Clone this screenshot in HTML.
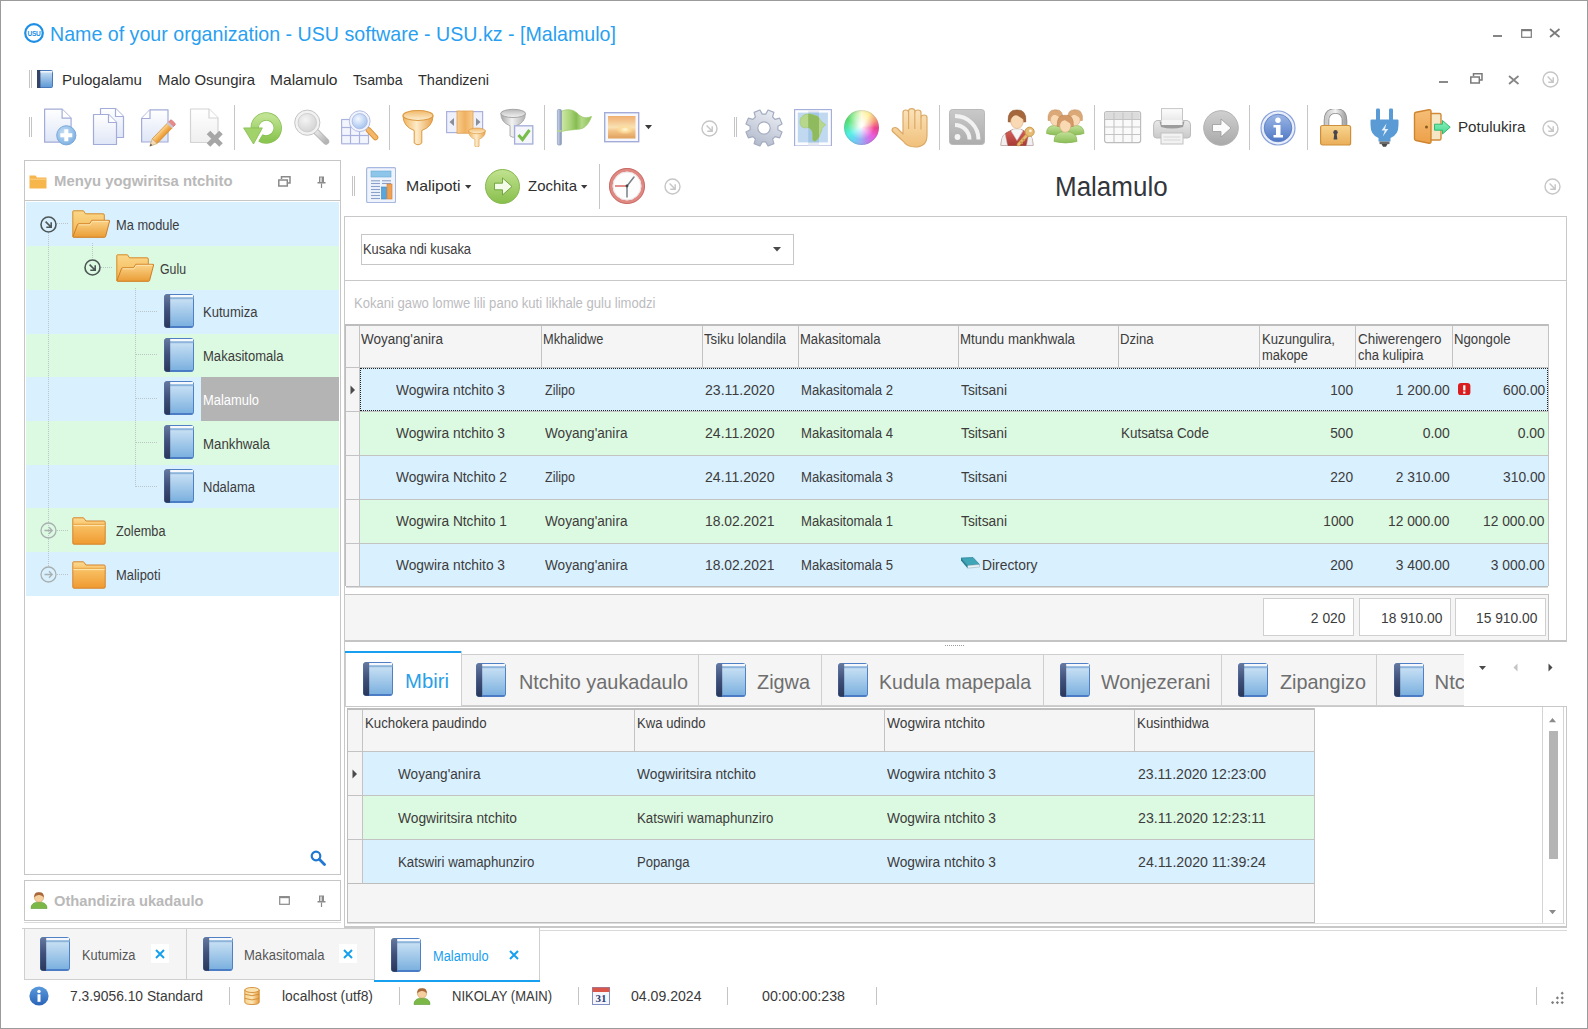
<!DOCTYPE html>
<html><head><meta charset="utf-8"><title>Malamulo</title>
<style>
html,body{margin:0;padding:0;}
body{width:1588px;height:1029px;position:relative;overflow:hidden;background:#fff;font-family:"Liberation Sans", sans-serif;}
body>div,body>span,body>svg{position:absolute;box-sizing:border-box;}
.t{white-space:nowrap;display:block;}
</style></head><body>
<div style="left:0px;top:0px;width:1588px;height:1029px;border:1px solid #9b9b9b;"></div>
<svg style="left:23.5px;top:22.5px" width="20" height="20" viewBox="0 0 20 20"><circle cx="10" cy="10" r="8.8" fill="#fff" stroke="#1e8fe6" stroke-width="2.2"/><text x="10" y="12.6" font-family="Liberation Sans, sans-serif" font-size="6.6" font-weight="700" fill="#1e8fe6" text-anchor="middle" letter-spacing="-0.3">USU</text></svg>
<span id="t1" class="t" style="left:49.5px;top:20.6px;line-height:26px;font-size:19.8px;color:#2a9ff0;font-weight:400;transform:scaleX(0.9920);transform-origin:left center;">Name of your organization - USU software - USU.kz - [Malamulo]</span>
<div style="left:1493px;top:35px;width:9px;height:2px;background:#858585"></div>
<svg style="left:1520.5px;top:28.5px" width="11" height="9" viewBox="0 0 11 9"><rect x="0.7" y="0.7" width="9.6" height="7.6" fill="none" stroke="#7a7a7a" stroke-width="1.2"/><path d="M0.7 1.2 H10.3" stroke="#7a7a7a" stroke-width="2"/></svg>
<svg style="left:1549px;top:28px" width="12" height="10" viewBox="0 0 12 10"><path d="M1 1 L10.5 9 M10.5 1 L1 9" stroke="#7a7a7a" stroke-width="1.7"/></svg>
<div style="left:29px;top:70px;width:1px;height:18px;background:#c4c4c4"></div>
<div style="left:31px;top:70px;width:1px;height:18px;background:#c4c4c4"></div>
<svg style="left:37px;top:70px" width="16" height="18" viewBox="0 0 16 18"><defs><linearGradient id="g1" x1="0" y1="0" x2="0" y2="1"><stop offset="0" stop-color="#cfe3f5"/><stop offset="1" stop-color="#5c98d6"/></linearGradient></defs><rect x="0.5" y="0.5" width="15" height="17" rx="1" fill="url(#g1)" stroke="#4a78bb"/><rect x="0" y="0" width="3.4" height="18" fill="#33436a"/><rect x="3.4" y="1" width="12" height="1.5" fill="#f0f5fa"/></svg>
<span id="t2" class="t" style="left:62px;top:69.5px;line-height:20px;font-size:15px;color:#2f2f2f;font-weight:400;transform:scaleX(1.0099);transform-origin:left center;">Pulogalamu</span>
<span id="t3" class="t" style="left:158px;top:69.5px;line-height:20px;font-size:15px;color:#2f2f2f;font-weight:400;transform:scaleX(0.9944);transform-origin:left center;">Malo Osungira</span>
<span id="t4" class="t" style="left:270px;top:69.5px;line-height:20px;font-size:15px;color:#2f2f2f;font-weight:400;transform:scaleX(1.0380);transform-origin:left center;">Malamulo</span>
<span id="t5" class="t" style="left:353px;top:69.5px;line-height:20px;font-size:15px;color:#2f2f2f;font-weight:400;transform:scaleX(0.9423);transform-origin:left center;">Tsamba</span>
<span id="t6" class="t" style="left:418px;top:69.5px;line-height:20px;font-size:15px;color:#2f2f2f;font-weight:400;transform:scaleX(0.9674);transform-origin:left center;">Thandizeni</span>
<div style="left:1439px;top:81px;width:9px;height:2px;background:#8a8a8a"></div>
<svg style="left:1470px;top:73px" width="13" height="11" viewBox="0 0 13 11"><path d="M3.5 3 V0.8 H12 V7 H9.5" fill="none" stroke="#7a7a7a" stroke-width="1.5"/><rect x="0.8" y="4" width="8.5" height="6" fill="#fff" stroke="#7a7a7a" stroke-width="1.5"/></svg>
<svg style="left:1508px;top:74.5px" width="12" height="10" viewBox="0 0 12 10"><path d="M1 1 L10.5 9 M10.5 1 L1 9" stroke="#858585" stroke-width="1.7"/></svg>
<svg style="left:1541.5px;top:70.5px" width="17" height="17" viewBox="0 0 17 17"><circle cx="8.5" cy="8.5" r="7.5" fill="none" stroke="#c6c6c6" stroke-width="1.4"/><path d="M5.6 5.6 L11 11 M6.3 11.2 H11.2 V6.3" fill="none" stroke="#c6c6c6" stroke-width="1.4"/></svg>
<div style="left:29px;top:117px;width:1px;height:20px;background:#c4c4c4"></div>
<div style="left:31px;top:117px;width:1px;height:20px;background:#c4c4c4"></div>
<div style="left:733.5px;top:117px;width:1px;height:20px;background:#c4c4c4"></div>
<div style="left:735.5px;top:117px;width:1px;height:20px;background:#c4c4c4"></div>
<div style="left:234px;top:105px;width:1px;height:45px;background:#c6c6c6"></div>
<div style="left:389px;top:105px;width:1px;height:45px;background:#c6c6c6"></div>
<div style="left:544px;top:105px;width:1px;height:45px;background:#c6c6c6"></div>
<div style="left:939px;top:105px;width:1px;height:45px;background:#c6c6c6"></div>
<div style="left:1094px;top:105px;width:1px;height:45px;background:#c6c6c6"></div>
<div style="left:1249px;top:105px;width:1px;height:45px;background:#c6c6c6"></div>
<div style="left:1307px;top:105px;width:1px;height:45px;background:#c6c6c6"></div>
<svg style="left:794px;top:109px" width="38" height="37" viewBox="0 0 38 37"><defs><clipPath id="g2"><rect x="14.2" y="0" width="10.8" height="38"/></clipPath></defs><rect x="0.6" y="0.6" width="36.8" height="36.4" fill="#fbfcfe" stroke="#a3acd8" stroke-width="1.1"/><rect x="14.2" y="1.2" width="10.8" height="35.2" fill="#e6e8f0"/><rect x="3.8" y="3.6" width="30.1" height="29.8" fill="#c0d9f1"/><rect x="14.2" y="3.6" width="10.8" height="29.8" fill="#a3c6e6"/><path d="M14 5 C17 4.5 21 6.5 24 7.5 C25.5 9.5 26.5 11.5 28 13 L31.5 15.5 C30.5 17.5 29 18 28 19.5 C27.8 21.5 27 23.5 26 25.5 C25 28.5 23.5 31 21 32.2 C19 32 18.6 31 18.5 29.5 C18.8 27 18.8 24.5 18 22 C17 20 15.5 19 14 18.5 C12 19 10 19 8 18 C6.5 16.5 6 15 6 13 C6 11 6.5 9.5 7.5 8 C9.5 6 11.5 5.2 14 5Z" fill="#b7d78c" stroke="#a5c978" stroke-width="0.7"/><path d="M14 5 C17 4.5 21 6.5 24 7.5 C25.5 9.5 26.5 11.5 28 13 L31.5 15.5 C30.5 17.5 29 18 28 19.5 C27.8 21.5 27 23.5 26 25.5 C25 28.5 23.5 31 21 32.2 C19 32 18.6 31 18.5 29.5 C18.8 27 18.8 24.5 18 22 C17 20 15.5 19 14 18.5 C12 19 10 19 8 18 C6.5 16.5 6 15 6 13 C6 11 6.5 9.5 7.5 8 C9.5 6 11.5 5.2 14 5Z" fill="#8fba5e" clip-path="url(#g2)"/></svg>
<svg style="left:40px;top:107px" width="40" height="40" viewBox="0 0 40 40"><defs><linearGradient id="g3" x1="0" y1="0" x2="0" y2="1"><stop offset="0" stop-color="#ffffff"/><stop offset="1" stop-color="#dde5f6"/></linearGradient><radialGradient id="g4" cx="0.4" cy="0.35" r="0.75"><stop offset="0" stop-color="#c4def4"/><stop offset="1" stop-color="#76abdf"/></radialGradient></defs><path d="M4.6 2.2 H22.1 L31.1 11.2 V35.2 H4.6 Z" fill="url(#g3)" stroke="#a3acd8" stroke-width="1.2" stroke-linejoin="round"/><path d="M22.1 2.2 V11.2 H31.1" fill="#fff" stroke="#a3acd8" stroke-width="1.2" stroke-linejoin="round"/><circle cx="26.3" cy="28.3" r="9.6" fill="url(#g4)" stroke="#7aa9dc" stroke-width="1"/><path d="M26.3 22.3 V34.3 M20.3 28.3 H32.3" stroke="#fff" stroke-width="4"/></svg>
<svg style="left:88.5px;top:107px" width="40" height="40" viewBox="0 0 40 40"><defs><linearGradient id="g5" x1="0" y1="0" x2="0" y2="1"><stop offset="0" stop-color="#ffffff"/><stop offset="1" stop-color="#dfe6f6"/></linearGradient></defs><path d="M11.5 1.5 H26.5 L34.5 9.5 V30.5 H11.5 Z" fill="url(#g5)" stroke="#a3acd8" stroke-width="1.2" stroke-linejoin="round"/><path d="M26.5 1.5 V9.5 H34.5" fill="#fff" stroke="#a3acd8" stroke-width="1.2" stroke-linejoin="round"/><path d="M4.5 7.5 H19.5 L27.5 15.5 V37.5 H4.5 Z" fill="url(#g5)" stroke="#a3acd8" stroke-width="1.2" stroke-linejoin="round"/><path d="M19.5 7.5 V15.5 H27.5" fill="#fff" stroke="#a3acd8" stroke-width="1.2" stroke-linejoin="round"/></svg>
<svg style="left:138px;top:107.5px" width="40" height="40" viewBox="0 0 40 40"><defs><linearGradient id="g6" x1="0" y1="0" x2="0" y2="1"><stop offset="0" stop-color="#ffffff"/><stop offset="1" stop-color="#dde5f6"/></linearGradient><linearGradient id="g7" x1="0" y1="0" x2="1" y2="0"><stop offset="0" stop-color="#fbd695"/><stop offset="0.5" stop-color="#f3b254"/><stop offset="1" stop-color="#e8932c"/></linearGradient></defs><path d="M12 1.8 H30 V34 H3.6 V10.5 Z" fill="url(#g6)" stroke="#a3acd8" stroke-width="1.2" stroke-linejoin="round"/><path d="M12 1.8 V10.5 H3.6" fill="#fff" stroke="#a3acd8" stroke-width="1.2" stroke-linejoin="round"/><g transform="translate(23.6 26) rotate(44)"><rect x="-3.4" y="-12" width="6.8" height="22" fill="url(#g7)" stroke="#cf8a34" stroke-width="0.7"/><rect x="-3.4" y="-17" width="6.8" height="4.2" rx="1.4" fill="#e98a8a" stroke="#cf6a6a" stroke-width="0.7"/><rect x="-3.4" y="-13.4" width="6.8" height="2.2" fill="#c4cbe0"/><path d="M-3.4 10 L0 17 L3.4 10Z" fill="#f3dbb4" stroke="#c9a06a" stroke-width="0.6"/><path d="M-1.2 14.5 L0 17 L1.2 14.5Z" fill="#555"/></g></svg>
<svg style="left:186px;top:107.5px" width="40" height="40" viewBox="0 0 40 40"><defs><linearGradient id="g8" x1="0" y1="0" x2="0" y2="1"><stop offset="0" stop-color="#ffffff"/><stop offset="1" stop-color="#efefef"/></linearGradient></defs><path d="M4.5 1 H23.0 L32.0 10 V34.5 H4.5 Z" fill="url(#g8)" stroke="#d4d4d4" stroke-width="1.2" stroke-linejoin="round"/><path d="M23.0 1 V10 H32.0" fill="#fff" stroke="#d4d4d4" stroke-width="1.2" stroke-linejoin="round"/><path d="M22.5 24.6 L35 37.1 M35 24.6 L22.5 37.1" stroke="#a6a6a6" stroke-width="5"/></svg>
<svg style="left:242px;top:108px" width="40" height="40" viewBox="0 0 40 40"><defs><linearGradient id="g9" x1="0" y1="0" x2="0" y2="1"><stop offset="0" stop-color="#c0e392"/><stop offset="1" stop-color="#8cc652"/></linearGradient></defs><path d="M12.7 19.9 A11.5 11.5 0 1 1 18.4 29.9" fill="none" stroke="#86bd50" stroke-width="8.4"/><path d="M12.7 19.9 A11.5 11.5 0 1 1 18.4 29.9" fill="none" stroke="url(#g9)" stroke-width="7"/><path d="M1.6 19.9 H20.4 L11.5 36 Z" fill="#a2d26a" stroke="#86bd50" stroke-width="0.8" stroke-linejoin="round"/></svg>
<svg style="left:292px;top:108px" width="40" height="40" viewBox="0 0 40 40"><defs><radialGradient id="g10" cx="0.4" cy="0.35" r="0.7"><stop offset="0" stop-color="#f4f4f4"/><stop offset="1" stop-color="#d2d2d2"/></radialGradient><linearGradient id="g11" x1="0" y1="0" x2="1" y2="1"><stop offset="0" stop-color="#e4e4e4"/><stop offset="1" stop-color="#b4b4b4"/></linearGradient></defs><path d="M24.5 24 L34 33.5" stroke="#b4b4b4" stroke-width="6.4" stroke-linecap="round"/><path d="M24.5 24 L34 33.5" stroke="url(#g11)" stroke-width="4.6" stroke-linecap="round"/><circle cx="15.3" cy="14.7" r="12.6" fill="#f2f2f2" stroke="#c4c4c4" stroke-width="1"/><circle cx="15.3" cy="14.7" r="9.3" fill="url(#g10)" stroke="#c9c9c9" stroke-width="0.8"/></svg>
<svg style="left:339px;top:107px" width="40" height="40" viewBox="0 0 40 40"><defs><radialGradient id="g12" cx="0.4" cy="0.35" r="0.7"><stop offset="0" stop-color="#f4f8ff"/><stop offset="1" stop-color="#9fc0ee"/></radialGradient></defs><rect x="2.3" y="12.5" width="27.4" height="24.3" fill="#f3f5fc"/><path d="M2.3 12.5 H29.7" stroke="#aab2de" stroke-width="1.2"/><path d="M2.3 20.5 H29.7" stroke="#aab2de" stroke-width="1.2"/><path d="M2.3 28.5 H29.7" stroke="#aab2de" stroke-width="1.2"/><path d="M2.3 36.8 H29.7" stroke="#aab2de" stroke-width="1.2"/><path d="M2.6 12.5 V36.8" stroke="#aab2de" stroke-width="1.2"/><path d="M11.5 12.5 V36.8" stroke="#aab2de" stroke-width="1.2"/><path d="M20.5 12.5 V36.8" stroke="#aab2de" stroke-width="1.2"/><path d="M29.5 12.5 V36.8" stroke="#aab2de" stroke-width="1.2"/><path d="M29.5 23 L36.5 30.5" stroke="#d9913a" stroke-width="5.6" stroke-linecap="round"/><path d="M29.5 23 L36.5 30.5" stroke="#f3b868" stroke-width="4" stroke-linecap="round"/><circle cx="20.7" cy="14.2" r="10.4" fill="#f1f4fc" stroke="#b4bde4" stroke-width="1"/><circle cx="20.7" cy="14.2" r="7.6" fill="url(#g12)" stroke="#a9b6e0" stroke-width="0.8"/></svg>
<svg style="left:398px;top:107px" width="40" height="40" viewBox="0 0 40 40"><g transform="translate(4 2.5) scale(1.0)"><defs><linearGradient id="g13" x1="0" y1="0" x2="1" y2="0"><stop offset="0" stop-color="#efb45e"/><stop offset="0.45" stop-color="#fdebc8"/><stop offset="1" stop-color="#e9a24c"/></linearGradient><linearGradient id="g14" x1="0" y1="0" x2="0" y2="1"><stop offset="0" stop-color="#f1b868"/><stop offset="1" stop-color="#fdf0d4"/></linearGradient></defs><path d="M1 6 Q1 17 12.2 21 V33.5 Q16 37 19.8 33.5 V21 Q31 17 31 6Z" fill="url(#g13)" stroke="#dc9a42" stroke-width="1"/><ellipse cx="16" cy="6" rx="15" ry="5" fill="url(#g14)" stroke="#dc9a42" stroke-width="1.2"/></g></svg>
<svg style="left:445.5px;top:106.5px" width="40" height="40" viewBox="0 0 40 40"><defs><linearGradient id="g15" x1="0" y1="0" x2="1" y2="0"><stop offset="0" stop-color="#f8cf90"/><stop offset="0.5" stop-color="#f0b060"/><stop offset="1" stop-color="#f8cf90"/></linearGradient></defs><rect x="0.6" y="4.6" width="36" height="21" fill="#eef1fb" stroke="#a9b1dc" stroke-width="1.2"/><rect x="11" y="4" width="16" height="22.2" fill="url(#g15)" stroke="#e0a050" stroke-width="0.8"/><path d="M8 11 V19 L3.5 15Z M30 11 V19 L34.5 15Z" fill="#8a8f9c"/><g transform="translate(22 20.5) scale(0.56)"><defs><linearGradient id="g16" x1="0" y1="0" x2="1" y2="0"><stop offset="0" stop-color="#efb45e"/><stop offset="0.45" stop-color="#fdebc8"/><stop offset="1" stop-color="#e9a24c"/></linearGradient><linearGradient id="g17" x1="0" y1="0" x2="0" y2="1"><stop offset="0" stop-color="#f1b868"/><stop offset="1" stop-color="#fdf0d4"/></linearGradient></defs><path d="M1 6 Q1 17 12.2 21 V33.5 Q16 37 19.8 33.5 V21 Q31 17 31 6Z" fill="url(#g16)" stroke="#dc9a42" stroke-width="1"/><ellipse cx="16" cy="6" rx="15" ry="5" fill="url(#g17)" stroke="#dc9a42" stroke-width="1.2"/></g></svg>
<svg style="left:499px;top:107px" width="40" height="40" viewBox="0 0 40 40"><g transform="translate(1 1.5) scale(0.82)"><defs><linearGradient id="g18" x1="0" y1="0" x2="1" y2="0"><stop offset="0" stop-color="#a6a6a6"/><stop offset="0.45" stop-color="#f2f2f2"/><stop offset="1" stop-color="#b0b0b0"/></linearGradient><linearGradient id="g19" x1="0" y1="0" x2="0" y2="1"><stop offset="0" stop-color="#b8b8b8"/><stop offset="1" stop-color="#f4f4f4"/></linearGradient></defs><path d="M1 6 Q1 17 12.2 21 V33.5 Q16 37 19.8 33.5 V21 Q31 17 31 6Z" fill="url(#g18)" stroke="#a4a4a4" stroke-width="1"/><ellipse cx="16" cy="6" rx="15" ry="5" fill="url(#g19)" stroke="#a4a4a4" stroke-width="1.2"/></g><rect x="15.6" y="18.8" width="18.2" height="18.2" fill="#f4f6fc" stroke="#a3acd8" stroke-width="1.3"/><path d="M19.5 28 L23.5 32.5 L30.5 23" fill="none" stroke="#78bd4a" stroke-width="3"/></svg>
<svg style="left:555px;top:108px" width="40" height="40" viewBox="0 0 40 40"><defs><linearGradient id="g20" x1="0" y1="0" x2="1" y2="0"><stop offset="0" stop-color="#cfe8a8"/><stop offset="0.3" stop-color="#a9d478"/><stop offset="0.5" stop-color="#86bb52"/><stop offset="0.68" stop-color="#b4da88"/><stop offset="1" stop-color="#8cc058"/></linearGradient><linearGradient id="g21" x1="0" y1="0" x2="1" y2="0"><stop offset="0" stop-color="#d4dcec"/><stop offset="0.5" stop-color="#a9b6d4"/><stop offset="1" stop-color="#8494b8"/></linearGradient></defs><path d="M6 3.5 C12 0.5 18 1.5 22 5 C25.5 8.5 29 11.5 36.5 8.5 C34.5 14 31 20 25 21 C19 22 14 21.5 6 23.5Z" fill="url(#g20)" stroke="#9cca6c" stroke-width="0.8"/><rect x="2.4" y="1.5" width="4" height="35.5" rx="1.2" fill="url(#g21)" stroke="#8796b8" stroke-width="0.7"/><rect x="2.2" y="22.2" width="4.4" height="1.6" fill="#b4da88"/></svg>
<svg style="left:604px;top:112px" width="40" height="40" viewBox="0 0 40 40"><defs><linearGradient id="g22" x1="0" y1="0" x2="0" y2="1"><stop offset="0" stop-color="#efae70"/><stop offset="0.5" stop-color="#f9e2b4"/><stop offset="0.66" stop-color="#f4c588"/><stop offset="1" stop-color="#dfa05e"/></linearGradient><radialGradient id="g23" cx="0.5" cy="0.5" r="0.5"><stop offset="0" stop-color="#fff8e0"/><stop offset="0.5" stop-color="#fbdc9a"/><stop offset="1" stop-color="#fbdc9a00"/></radialGradient></defs><rect x="0.7" y="0.7" width="34" height="29" fill="#f6f8fd" stroke="#a3acd8" stroke-width="1.4"/><rect x="4" y="4" width="27.5" height="22.5" fill="url(#g22)"/><ellipse cx="21" cy="17.5" rx="9" ry="5" fill="url(#g23)"/></svg>
<svg style="left:744px;top:107.5px" width="40" height="40" viewBox="0 0 40 40"><defs><linearGradient id="g24" x1="0" y1="0" x2="0" y2="1"><stop offset="0" stop-color="#e8ebf2"/><stop offset="1" stop-color="#b3bbcc"/></linearGradient></defs><path d="M33.49 16.27 L38.23 16.87 L38.23 23.13 L33.49 23.73 L32.18 26.90 L35.11 30.68 L30.68 35.11 L26.90 32.18 L23.73 33.49 L23.13 38.23 L16.87 38.23 L16.27 33.49 L13.10 32.18 L9.32 35.11 L4.89 30.68 L7.82 26.90 L6.51 23.73 L1.77 23.13 L1.77 16.87 L6.51 16.27 L7.82 13.10 L4.89 9.32 L9.32 4.89 L13.10 7.82 L16.27 6.51 L16.87 1.77 L23.13 1.77 L23.73 6.51 L26.90 7.82 L30.68 4.89 L35.11 9.32 L32.18 13.10Z" fill="url(#g24)" stroke="#a4acc0" stroke-width="1.2" stroke-linejoin="round" transform="rotate(22.5 20 20)"/><circle cx="20" cy="20" r="6.2" fill="#fff" stroke="#a4acc0" stroke-width="1.2"/></svg>
<svg style="left:890px;top:108px" width="40" height="40" viewBox="0 0 40 40"><defs><linearGradient id="g25" x1="0" y1="0" x2="0" y2="1"><stop offset="0" stop-color="#fbe3bb"/><stop offset="1" stop-color="#f0c07a"/></linearGradient></defs><path d="M13 26 V4.6 Q13 2 15.8 2 Q18.6 2 18.6 4.6 V3.1 Q18.6 0.6 21.7 0.6 Q24.8 0.6 24.8 3.1 V4.6 Q24.8 2 27.9 2 Q31 2 31 4.6 V9.6 Q31 7 34 7 Q37 7 37 9.6 V27 Q37 39 25 39 Q17 39 13 33 L2.8 23.8 Q1.2 21.8 3.2 20 Q5.4 18.8 7.5 20.5 Z" fill="url(#g25)" stroke="#dcaa68" stroke-width="1.2" stroke-linejoin="round"/><path d="M18.6 4.6 V21 M24.8 4.6 V21 M31 9.6 V21.5" stroke="#dcaa68" stroke-width="1.2" fill="none"/></svg>
<svg style="left:949px;top:109px" width="40" height="40" viewBox="0 0 40 40"><defs><linearGradient id="g26" x1="0" y1="0" x2="0" y2="1"><stop offset="0" stop-color="#c9c9c9"/><stop offset="1" stop-color="#adadad"/></linearGradient></defs><rect x="0.5" y="0.5" width="35" height="35" rx="3" fill="url(#g26)" stroke="#b9b9b9"/><circle cx="8.5" cy="28" r="2.9" fill="#f4f4f4"/><path d="M6 16 A14.5 14.5 0 0 1 20.5 30.5" fill="none" stroke="#f2f2f2" stroke-width="4"/><path d="M6 7 A23.5 23.5 0 0 1 29.5 30.5" fill="none" stroke="#f2f2f2" stroke-width="4"/></svg>
<svg style="left:1000px;top:107.5px" width="40" height="40" viewBox="0 0 40 40"><defs><linearGradient id="g27" x1="0" y1="0" x2="0" y2="1"><stop offset="0" stop-color="#d8605a"/><stop offset="1" stop-color="#a93a36"/></linearGradient></defs><path d="M1 37.5 Q1 26 9.5 23.2 L13 21.5 H21 L24.5 23.2 Q33 26 33 37.5Z" fill="url(#g27)" stroke="#98403c" stroke-width="0.8"/><path d="M11 22.8 L17 32.5 L23 22.8 L20.5 21 H13.5Z" fill="#f6f6f6" stroke="#c9c9c9" stroke-width="0.6"/><path d="M1 37.5 Q1 28.5 5 25.5 L7.5 37.5Z M33 37.5 Q33 28.5 29 25.5 L26.5 37.5Z" fill="#f0f0f0" stroke="#c4c4c4" stroke-width="0.5"/><path d="M8.200000000000001 14.0 Q7.2 1.4000000000000004 17 1.9000000000000004 Q26.8 1.4000000000000004 25.8 14.0 Z" fill="#a5673c" stroke="#8a5028" stroke-width="0.5"/><ellipse cx="17" cy="13.3" rx="6.231999999999999" ry="7.22" fill="#f9d9b4" stroke="#dba878" stroke-width="0.6"/><path d="M10.54 11.5 Q14.72 5.28 18.52 8.32 Q21.56 10.22 23.46 11.5 Q23.84 3.4000000000000004 17 3.3000000000000003 Q10.16 3.4000000000000004 10.54 11.5Z" fill="#a5673c"/><path d="M18.5 36.5 L27.5 26.5" stroke="#c9974a" stroke-width="3.4" stroke-linecap="round"/><path d="M18.5 36.5 L27.5 26.5" stroke="#e7bd74" stroke-width="2" stroke-linecap="round"/><circle cx="29.6" cy="23.8" r="4.6" fill="#e7bd74" stroke="#c9974a" stroke-width="1"/><circle cx="30.4" cy="22.8" r="1.4" fill="#fdf6e8"/><path d="M20.3 33.5 L22.6 35.8 M22.6 31 L24.6 33" stroke="#c9974a" stroke-width="1.8"/></svg>
<svg style="left:1046px;top:108px" width="40" height="40" viewBox="0 0 40 40"><defs><linearGradient id="g28" x1="0" y1="0" x2="0" y2="1"><stop offset="0" stop-color="#c2e29a"/><stop offset="1" stop-color="#8cbd57"/></linearGradient></defs><path d="M0.5 25.5 Q0.5 17.5 8.5 17.5 Q16.5 17.5 16.5 25.5 Q8.5 28.5 0.5 25.5Z" fill="url(#g28)" stroke="#86b455" stroke-width="0.7"/><path d="M2.0999999999999996 12.5 Q1.0999999999999996 1.2999999999999998 9.5 1.7999999999999998 Q17.9 1.2999999999999998 16.9 12.5 Z" fill="#dba878" stroke="#c08a58" stroke-width="0.5"/><ellipse cx="9.5" cy="11.8" rx="5.084" ry="5.89" fill="#f9d9b4" stroke="#dba878" stroke-width="0.6"/><path d="M4.23 10 Q7.640000000000001 5.11 10.74 7.59 Q13.219999999999999 9.14 14.77 10 Q15.08 3.3 9.5 3.1999999999999997 Q3.92 3.3 4.23 10Z" fill="#dba878"/><path d="M22.0 25.5 Q22.0 17.5 30 17.5 Q38.0 17.5 38.0 25.5 Q30 28.5 22.0 25.5Z" fill="url(#g28)" stroke="#86b455" stroke-width="0.7"/><path d="M21.6 12.5 Q20.6 1.2999999999999998 29 1.7999999999999998 Q37.400000000000006 1.2999999999999998 36.400000000000006 12.5 Z" fill="#dba878" stroke="#c08a58" stroke-width="0.5"/><ellipse cx="29" cy="11.8" rx="5.084" ry="5.89" fill="#f9d9b4" stroke="#dba878" stroke-width="0.6"/><path d="M23.73 10 Q27.14 5.11 30.240000000000002 7.59 Q32.72 9.14 34.269999999999996 10 Q34.58 3.3 29 3.1999999999999997 Q23.42 3.3 23.73 10Z" fill="#dba878"/><path d="M8.0 33.5 Q8.0 23.5 19.5 23.5 Q31.0 23.5 31.0 33.5 Q19.5 36.5 8.0 33.5Z" fill="url(#g28)" stroke="#86b455" stroke-width="0.7"/><path d="M11.3 18.5 Q10.3 6.699999999999999 19.3 7.199999999999999 Q28.3 6.699999999999999 27.3 18.5 Z" fill="#d39a68" stroke="#b87e4c" stroke-width="0.5"/><ellipse cx="19.3" cy="17.8" rx="5.576" ry="6.46" fill="#f9d9b4" stroke="#dba878" stroke-width="0.6"/><path d="M13.520000000000001 16 Q17.26 10.54 20.66 13.26 Q23.380000000000003 14.96 25.08 16 Q25.42 8.7 19.3 8.6 Q13.18 8.7 13.520000000000001 16Z" fill="#d39a68"/></svg>
<svg style="left:1104px;top:111px" width="40" height="40" viewBox="0 0 40 40"><rect x="0.6" y="0.6" width="36" height="31" rx="2" fill="#fafafa" stroke="#bdbdbd" stroke-width="1.2"/><path d="M1.2 8.5 V3 Q1.2 1.2 3 1.2 H34 Q35.8 1.2 35.8 3 V8.5Z" fill="#dcdcdc"/><path d="M1 8.5 H36" stroke="#c4c4c4" stroke-width="1.1"/><path d="M1 16 H36" stroke="#c4c4c4" stroke-width="1.1"/><path d="M1 23.5 H36" stroke="#c4c4c4" stroke-width="1.1"/><path d="M10 1.5 V31" stroke="#c4c4c4" stroke-width="1.1"/><path d="M19 1.5 V31" stroke="#c4c4c4" stroke-width="1.1"/><path d="M28 1.5 V31" stroke="#c4c4c4" stroke-width="1.1"/></svg>
<svg style="left:1153px;top:108px" width="40" height="40" viewBox="0 0 40 40"><defs><linearGradient id="g29" x1="0" y1="0" x2="0" y2="1"><stop offset="0" stop-color="#fdfdfd"/><stop offset="1" stop-color="#e2e2e2"/></linearGradient><linearGradient id="g30" x1="0" y1="0" x2="0" y2="1"><stop offset="0" stop-color="#e9e9e9"/><stop offset="1" stop-color="#c9c9c9"/></linearGradient></defs><rect x="8.5" y="0.6" width="21" height="16" fill="url(#g29)" stroke="#c6c6c6" stroke-width="1"/><path d="M4 12.5 H34 Q37.5 13 37.5 17 V27 Q37.5 30 34.5 30 H3.5 Q0.6 30 0.6 27 V17 Q0.6 13 4 12.5Z" fill="url(#g30)" stroke="#bcbcbc" stroke-width="1"/><path d="M6.5 13.5 H31.5 L30 19 Q19 22 8 19Z" fill="#9c9c9c"/><rect x="8.5" y="12" width="21" height="5" fill="#f4f4f4"/><rect x="8" y="25" width="22" height="11" fill="#f2f2f2" stroke="#c2c2c2" stroke-width="1"/><path d="M10.5 29 H27.5 M10.5 32 H27.5" stroke="#d6d6d6" stroke-width="1"/></svg>
<svg style="left:1203px;top:109.5px" width="40" height="40" viewBox="0 0 40 40"><defs><linearGradient id="g31" x1="0" y1="0" x2="0" y2="1"><stop offset="0" stop-color="#d0d0d0"/><stop offset="1" stop-color="#a9a9a9"/></linearGradient></defs><circle cx="18" cy="18" r="17.3" fill="url(#g31)" stroke="#b2b2b2" stroke-width="1"/><path d="M9.5 14.5 H18 V9 L28 18 L18 27 V21.5 H9.5Z" fill="#fbfbfb" stroke="#9a9a9a" stroke-width="0.8"/></svg>
<svg style="left:1259.5px;top:109.5px" width="40" height="40" viewBox="0 0 40 40"><defs><linearGradient id="g32" x1="0" y1="0" x2="0" y2="1"><stop offset="0" stop-color="#9db7e6"/><stop offset="1" stop-color="#4f78c4"/></linearGradient></defs><circle cx="18" cy="18" r="17" fill="#e9effa" stroke="#8aa2da" stroke-width="1.2"/><circle cx="18" cy="18" r="13.8" fill="url(#g32)" stroke="#5577c0" stroke-width="0.8"/><circle cx="18" cy="10.3" r="2.7" fill="#fff"/><path d="M13.5 15 H20.5 V25 H23 V27.5 H13.5 V25 H16 V17.5 H13.5Z" fill="#fff"/></svg>
<svg style="left:1320px;top:108.5px" width="40" height="40" viewBox="0 0 40 40"><defs><linearGradient id="g33" x1="0" y1="0" x2="0" y2="1"><stop offset="0" stop-color="#f8d590"/><stop offset="1" stop-color="#eaae58"/></linearGradient><linearGradient id="g34" x1="0" y1="0" x2="1" y2="0"><stop offset="0" stop-color="#c9c9c9"/><stop offset="0.5" stop-color="#f2f2f2"/><stop offset="1" stop-color="#a9a9a9"/></linearGradient></defs><path d="M6.5 18 V11.5 Q6.5 2 15.5 2 Q24.5 2 24.5 11.5 V18" fill="none" stroke="#8e8e8e" stroke-width="5.6"/><path d="M6.5 18 V11.5 Q6.5 2 15.5 2 Q24.5 2 24.5 11.5 V18" fill="none" stroke="url(#g34)" stroke-width="3.8"/><rect x="0.6" y="16.5" width="30" height="19.5" rx="2" fill="url(#g33)" stroke="#cf8f3a" stroke-width="1.2"/><circle cx="15.5" cy="23.3" r="2.2" fill="#4a4650"/><path d="M14.4 24 H16.6 L17.4 30.5 H13.6Z" fill="#4a4650"/></svg>
<svg style="left:1370px;top:108px" width="40" height="40" viewBox="0 0 40 40"><rect x="6" y="0.5" width="4" height="13" rx="1.2" fill="#5b9bd5"/><rect x="19" y="0.5" width="4" height="13" rx="1.2" fill="#5b9bd5"/><path d="M1.5 11.5 H27.5 Q28.5 11.5 28.5 12.5 V17 Q28.5 27 20.5 30 V33.5 H8.5 V30 Q0.5 27 0.5 17 V12.5 Q0.5 11.5 1.5 11.5Z" fill="#5b9bd5"/><path d="M16.5 15.5 L11.5 22.5 H14.8 L12.8 28.5 L18.3 21 H15 Z" fill="#e4f0fb"/><rect x="9.5" y="33.5" width="10" height="2.6" fill="#6a6a6a"/><path d="M11.5 36 H17.5 L16 38.8 H13Z" fill="#4a4a4a"/></svg>
<svg style="left:1412px;top:109px" width="40" height="40" viewBox="0 0 40 40"><defs><linearGradient id="g35" x1="0" y1="0" x2="0" y2="1"><stop offset="0" stop-color="#f5be78"/><stop offset="1" stop-color="#eda048"/></linearGradient><linearGradient id="g36" x1="0" y1="0" x2="0" y2="1"><stop offset="0" stop-color="#8af0bc"/><stop offset="1" stop-color="#48d890"/></linearGradient></defs><rect x="12" y="4.5" width="17" height="26.5" rx="1.5" fill="#f7e6c4" stroke="#d08a38" stroke-width="1.4"/><path d="M2.5 5 Q2.5 3.6 4 3.3 L17 0.8 Q19 0.5 19 2.5 V32.5 Q19 34.5 17 34.2 L4 31.5 Q2.5 31.2 2.5 29.8Z" fill="url(#g35)" stroke="#cf8530" stroke-width="1.4"/><circle cx="14.5" cy="18" r="1.5" fill="#8a5a20"/><path d="M22.5 15.2 H30.5 V11.5 L38.2 18.2 L30.5 25 V21.2 H22.5Z" fill="url(#g36)" stroke="#35b872" stroke-width="1"/></svg>
<div style="left:843.6px;top:109.6px;width:35.6px;height:35.6px;border-radius:50%;background:radial-gradient(circle at 49% 45%, #fff 0%, rgba(255,255,255,0.85) 10%, rgba(255,255,255,0) 52%), conic-gradient(from 0deg, #fdf8c8, #fff09a 30deg, #f8a078 62deg, #f0408c 92deg, #e860e0 128deg, #c080ec 155deg, #98b0f4 182deg, #68d4f4 212deg, #50f0e4 242deg, #50e8a0 272deg, #58e070 300deg, #a4f0a0 332deg, #fdf8c8 360deg);box-shadow:inset 0 0 2.5px rgba(100,100,120,.55);"></div>
<svg style="left:645px;top:125px" width="8" height="5" viewBox="0 0 8 5"><path d="M0 0 H7 L3.5 4.2Z" fill="#3a3a3a"/></svg>
<svg style="left:701.2px;top:119.7px" width="17" height="17" viewBox="0 0 17 17"><circle cx="8.5" cy="8.5" r="7.5" fill="none" stroke="#c6c6c6" stroke-width="1.4"/><path d="M5.6 5.6 L11 11 M6.3 11.2 H11.2 V6.3" fill="none" stroke="#c6c6c6" stroke-width="1.4"/></svg>
<span id="t7" class="t" style="left:1458px;top:118.0px;line-height:19px;font-size:14.6px;color:#2f2f2f;font-weight:400;transform:scaleX(1.0400);transform-origin:left center;">Potulukira</span>
<svg style="left:1541.5px;top:119.5px" width="17" height="17" viewBox="0 0 17 17"><circle cx="8.5" cy="8.5" r="7.5" fill="none" stroke="#c6c6c6" stroke-width="1.4"/><path d="M5.6 5.6 L11 11 M6.3 11.2 H11.2 V6.3" fill="none" stroke="#c6c6c6" stroke-width="1.4"/></svg>
<div style="left:24px;top:160px;width:317px;height:715px;border:1px solid #c6c6c6;background:#fff;"></div>
<div style="left:24px;top:200px;width:317px;height:1px;background:#c6c6c6"></div>
<svg style="left:29px;top:174.5px" width="18" height="14" viewBox="0 0 18 14"><path d="M0.5 0.5 H6.5 L8 2.5 H17 Q17.5 2.5 17.5 3 V13 Q17.5 13.5 17 13.5 H1 Q0.5 13.5 0.5 13Z" fill="#f7b64c"/><path d="M0.5 4.2 H17.5" stroke="#fbd389" stroke-width="1"/></svg>
<span id="t8" class="t" style="left:54px;top:172.3px;line-height:18px;font-size:14.2px;color:#b9b9b9;font-weight:700;transform:scaleX(1.0484);transform-origin:left center;">Menyu yogwiritsa ntchito</span>
<svg style="left:277.5px;top:175.5px" width="13" height="11" viewBox="0 0 13 11"><path d="M3.5 3 V0.8 H12 V7 H9.5" fill="none" stroke="#8a8a8a" stroke-width="1.5"/><rect x="0.8" y="4" width="8.5" height="6" fill="#fff" stroke="#8a8a8a" stroke-width="1.5"/></svg>
<svg style="left:316.5px;top:175.5px" width="9" height="12" viewBox="0 0 9 12"><path d="M2 0.5 H7 V6 H8.5 V7.5 H0.5 V6 H2Z" fill="#8a8a8a"/><path d="M4.5 7.5 V12" stroke="#8a8a8a" stroke-width="1.2"/><rect x="3.4" y="1.5" width="1.2" height="4.5" fill="#fff"/></svg>
<div style="left:26px;top:202px;width:313px;height:44px;background:#d9f0ff"></div>
<div style="left:26px;top:246px;width:313px;height:44px;background:#dcf9e1"></div>
<div style="left:26px;top:290px;width:313px;height:44px;background:#d9f0ff"></div>
<div style="left:26px;top:334px;width:313px;height:43px;background:#dcf9e1"></div>
<div style="left:26px;top:377px;width:313px;height:44px;background:#d9f0ff"></div>
<div style="left:26px;top:421px;width:313px;height:44px;background:#dcf9e1"></div>
<div style="left:26px;top:465px;width:313px;height:43px;background:#d9f0ff"></div>
<div style="left:26px;top:508px;width:313px;height:44px;background:#dcf9e1"></div>
<div style="left:26px;top:552px;width:313px;height:44px;background:#d9f0ff"></div>
<div style="left:48px;top:233px;width:1px;height:333px;background:repeating-linear-gradient(to bottom,#bcc6c8 0 1px,transparent 1px 2px);"></div>
<div style="left:57px;top:223px;width:12px;height:1px;background:repeating-linear-gradient(to right,#bcc6c8 0 1px,transparent 1px 2px);"></div>
<div style="left:92px;top:243px;width:1px;height:16px;background:repeating-linear-gradient(to bottom,#bcc6c8 0 1px,transparent 1px 2px);"></div>
<div style="left:101px;top:267px;width:12px;height:1px;background:repeating-linear-gradient(to right,#bcc6c8 0 1px,transparent 1px 2px);"></div>
<div style="left:135px;top:288px;width:1px;height:199px;background:repeating-linear-gradient(to bottom,#bcc6c8 0 1px,transparent 1px 2px);"></div>
<div style="left:136px;top:311px;width:21px;height:1px;background:repeating-linear-gradient(to right,#bcc6c8 0 1px,transparent 1px 2px);"></div>
<div style="left:136px;top:354px;width:21px;height:1px;background:repeating-linear-gradient(to right,#bcc6c8 0 1px,transparent 1px 2px);"></div>
<div style="left:136px;top:398px;width:21px;height:1px;background:repeating-linear-gradient(to right,#bcc6c8 0 1px,transparent 1px 2px);"></div>
<div style="left:136px;top:442px;width:21px;height:1px;background:repeating-linear-gradient(to right,#bcc6c8 0 1px,transparent 1px 2px);"></div>
<div style="left:136px;top:486px;width:21px;height:1px;background:repeating-linear-gradient(to right,#bcc6c8 0 1px,transparent 1px 2px);"></div>
<div style="left:57px;top:530px;width:12px;height:1px;background:repeating-linear-gradient(to right,#bcc6c8 0 1px,transparent 1px 2px);"></div>
<div style="left:57px;top:574px;width:12px;height:1px;background:repeating-linear-gradient(to right,#bcc6c8 0 1px,transparent 1px 2px);"></div>
<svg style="left:39.7px;top:215.725px" width="17" height="17" viewBox="0 0 17 17"><circle cx="8.5" cy="8.5" r="7.5" fill="none" stroke="#4d5656" stroke-width="1.6"/><path d="M5.6 5.6 L11 11 M6.3 11.2 H11.2 V6.3" fill="none" stroke="#4d5656" stroke-width="1.6"/></svg>
<svg style="left:72px;top:209.825px" width="38" height="28" viewBox="0 0 38 28"><defs><linearGradient id="g37" x1="0" y1="0" x2="0" y2="1"><stop offset="0" stop-color="#fbd78a"/><stop offset="1" stop-color="#f2b550"/></linearGradient><linearGradient id="g38" x1="0" y1="0" x2="0" y2="1"><stop offset="0" stop-color="#fbd58a"/><stop offset="1" stop-color="#ea9c36"/></linearGradient></defs><path d="M1.5 0.8 H11.5 L13.5 3.8 H31 Q32.3 3.8 32.3 5 V26.5 H0.8 V1.5 Q0.8 0.8 1.5 0.8Z" fill="url(#g37)" stroke="#d48a2a" stroke-width="1"/><path d="M6.5 13.8 H17.5 L19.8 10.3 H37 Q37.8 10.3 37.6 11 L33.6 26.4 Q33.3 27.3 32.5 27.3 H1.5 Q0.7 27.3 1 26.4 L5.5 14.6 Q5.8 13.8 6.5 13.8Z" fill="url(#g38)" stroke="#cf7d22" stroke-width="1"/><path d="M6.8 14.8 H18 L20.3 11.3 H36.3" fill="none" stroke="#fde6b0" stroke-width="1"/></svg>
<span id="t9" class="t" style="left:115.5px;top:216.975px;line-height:18px;font-size:13.8px;color:#3c3c3c;font-weight:400;transform:scaleX(0.9302);transform-origin:left center;">Ma module</span>
<svg style="left:83.5px;top:259.475px" width="17" height="17" viewBox="0 0 17 17"><circle cx="8.5" cy="8.5" r="7.5" fill="none" stroke="#4d5656" stroke-width="1.6"/><path d="M5.6 5.6 L11 11 M6.3 11.2 H11.2 V6.3" fill="none" stroke="#4d5656" stroke-width="1.6"/></svg>
<svg style="left:116px;top:253.675px" width="38" height="28" viewBox="0 0 38 28"><defs><linearGradient id="g39" x1="0" y1="0" x2="0" y2="1"><stop offset="0" stop-color="#fbd78a"/><stop offset="1" stop-color="#f2b550"/></linearGradient><linearGradient id="g40" x1="0" y1="0" x2="0" y2="1"><stop offset="0" stop-color="#fbd58a"/><stop offset="1" stop-color="#ea9c36"/></linearGradient></defs><path d="M1.5 0.8 H11.5 L13.5 3.8 H31 Q32.3 3.8 32.3 5 V26.5 H0.8 V1.5 Q0.8 0.8 1.5 0.8Z" fill="url(#g39)" stroke="#d48a2a" stroke-width="1"/><path d="M6.5 13.8 H17.5 L19.8 10.3 H37 Q37.8 10.3 37.6 11 L33.6 26.4 Q33.3 27.3 32.5 27.3 H1.5 Q0.7 27.3 1 26.4 L5.5 14.6 Q5.8 13.8 6.5 13.8Z" fill="url(#g40)" stroke="#cf7d22" stroke-width="1"/><path d="M6.8 14.8 H18 L20.3 11.3 H36.3" fill="none" stroke="#fde6b0" stroke-width="1"/></svg>
<span id="t10" class="t" style="left:159.5px;top:260.725px;line-height:18px;font-size:13.8px;color:#3c3c3c;font-weight:400;transform:scaleX(0.8917);transform-origin:left center;">Gulu</span>
<svg style="left:164px;top:294px" width="30" height="34" viewBox="0 0 30 34"><defs><linearGradient id="g41" x1="0" y1="0" x2="0" y2="1"><stop offset="0" stop-color="#d3e7f7"/><stop offset="1" stop-color="#78aede"/></linearGradient><linearGradient id="g42" x1="0" y1="0" x2="0" y2="1"><stop offset="0" stop-color="#66799f"/><stop offset="0.5" stop-color="#3f4f78"/><stop offset="1" stop-color="#2a375a"/></linearGradient></defs><rect x="0.5" y="0.5" width="29" height="33" rx="2.5" fill="url(#g41)" stroke="#4f7fc4"/><rect x="1" y="3" width="28.5" height="2.2" fill="#8db4da"/><rect x="2" y="1" width="27" height="2.2" fill="#f6f8fb"/><path d="M3 0.3 H6.2 V33.7 H3 Q0.3 33.7 0.3 31 V3 Q0.3 0.3 3 0.3Z" fill="url(#g42)"/><rect x="6.2" y="32" width="22.5" height="1.3" fill="#4a7cc6"/></svg>
<span id="t11" class="t" style="left:202.5px;top:304.475px;line-height:18px;font-size:13.8px;color:#3c3c3c;font-weight:400;transform:scaleX(0.9476);transform-origin:left center;">Kutumiza</span>
<svg style="left:164px;top:338px" width="30" height="34" viewBox="0 0 30 34"><defs><linearGradient id="g43" x1="0" y1="0" x2="0" y2="1"><stop offset="0" stop-color="#d3e7f7"/><stop offset="1" stop-color="#78aede"/></linearGradient><linearGradient id="g44" x1="0" y1="0" x2="0" y2="1"><stop offset="0" stop-color="#66799f"/><stop offset="0.5" stop-color="#3f4f78"/><stop offset="1" stop-color="#2a375a"/></linearGradient></defs><rect x="0.5" y="0.5" width="29" height="33" rx="2.5" fill="url(#g43)" stroke="#4f7fc4"/><rect x="1" y="3" width="28.5" height="2.2" fill="#8db4da"/><rect x="2" y="1" width="27" height="2.2" fill="#f6f8fb"/><path d="M3 0.3 H6.2 V33.7 H3 Q0.3 33.7 0.3 31 V3 Q0.3 0.3 3 0.3Z" fill="url(#g44)"/><rect x="6.2" y="32" width="22.5" height="1.3" fill="#4a7cc6"/></svg>
<span id="t12" class="t" style="left:202.5px;top:348.225px;line-height:18px;font-size:13.8px;color:#3c3c3c;font-weight:400;transform:scaleX(0.9457);transform-origin:left center;">Makasitomala</span>
<div style="left:201px;top:377px;width:138px;height:44px;background:#b4b4b4"></div>
<svg style="left:164px;top:381px" width="30" height="34" viewBox="0 0 30 34"><defs><linearGradient id="g45" x1="0" y1="0" x2="0" y2="1"><stop offset="0" stop-color="#d3e7f7"/><stop offset="1" stop-color="#78aede"/></linearGradient><linearGradient id="g46" x1="0" y1="0" x2="0" y2="1"><stop offset="0" stop-color="#66799f"/><stop offset="0.5" stop-color="#3f4f78"/><stop offset="1" stop-color="#2a375a"/></linearGradient></defs><rect x="0.5" y="0.5" width="29" height="33" rx="2.5" fill="url(#g45)" stroke="#4f7fc4"/><rect x="1" y="3" width="28.5" height="2.2" fill="#8db4da"/><rect x="2" y="1" width="27" height="2.2" fill="#f6f8fb"/><path d="M3 0.3 H6.2 V33.7 H3 Q0.3 33.7 0.3 31 V3 Q0.3 0.3 3 0.3Z" fill="url(#g46)"/><rect x="6.2" y="32" width="22.5" height="1.3" fill="#4a7cc6"/></svg>
<span id="t13" class="t" style="left:202.5px;top:391.975px;line-height:18px;font-size:13.8px;color:#fff;font-weight:400;transform:scaleX(0.9363);transform-origin:left center;">Malamulo</span>
<svg style="left:164px;top:425px" width="30" height="34" viewBox="0 0 30 34"><defs><linearGradient id="g47" x1="0" y1="0" x2="0" y2="1"><stop offset="0" stop-color="#d3e7f7"/><stop offset="1" stop-color="#78aede"/></linearGradient><linearGradient id="g48" x1="0" y1="0" x2="0" y2="1"><stop offset="0" stop-color="#66799f"/><stop offset="0.5" stop-color="#3f4f78"/><stop offset="1" stop-color="#2a375a"/></linearGradient></defs><rect x="0.5" y="0.5" width="29" height="33" rx="2.5" fill="url(#g47)" stroke="#4f7fc4"/><rect x="1" y="3" width="28.5" height="2.2" fill="#8db4da"/><rect x="2" y="1" width="27" height="2.2" fill="#f6f8fb"/><path d="M3 0.3 H6.2 V33.7 H3 Q0.3 33.7 0.3 31 V3 Q0.3 0.3 3 0.3Z" fill="url(#g48)"/><rect x="6.2" y="32" width="22.5" height="1.3" fill="#4a7cc6"/></svg>
<span id="t14" class="t" style="left:202.5px;top:435.725px;line-height:18px;font-size:13.8px;color:#3c3c3c;font-weight:400;transform:scaleX(0.9599);transform-origin:left center;">Mankhwala</span>
<svg style="left:164px;top:469px" width="30" height="34" viewBox="0 0 30 34"><defs><linearGradient id="g49" x1="0" y1="0" x2="0" y2="1"><stop offset="0" stop-color="#d3e7f7"/><stop offset="1" stop-color="#78aede"/></linearGradient><linearGradient id="g50" x1="0" y1="0" x2="0" y2="1"><stop offset="0" stop-color="#66799f"/><stop offset="0.5" stop-color="#3f4f78"/><stop offset="1" stop-color="#2a375a"/></linearGradient></defs><rect x="0.5" y="0.5" width="29" height="33" rx="2.5" fill="url(#g49)" stroke="#4f7fc4"/><rect x="1" y="3" width="28.5" height="2.2" fill="#8db4da"/><rect x="2" y="1" width="27" height="2.2" fill="#f6f8fb"/><path d="M3 0.3 H6.2 V33.7 H3 Q0.3 33.7 0.3 31 V3 Q0.3 0.3 3 0.3Z" fill="url(#g50)"/><rect x="6.2" y="32" width="22.5" height="1.3" fill="#4a7cc6"/></svg>
<span id="t15" class="t" style="left:202.5px;top:479.475px;line-height:18px;font-size:13.8px;color:#3c3c3c;font-weight:400;transform:scaleX(0.9417);transform-origin:left center;">Ndalama</span>
<svg style="left:39.7px;top:522.075px" width="17" height="17" viewBox="0 0 17 17"><circle cx="8.5" cy="8.5" r="7.5" fill="none" stroke="#a8b0b0" stroke-width="1.3"/><path d="M4.5 8.5 H12 M9 5.3 L12.2 8.5 L9 11.7" fill="none" stroke="#a8b0b0" stroke-width="1.3"/></svg>
<svg style="left:72px;top:516.775px" width="34" height="28" viewBox="0 0 34 28"><defs><linearGradient id="g51" x1="0" y1="0" x2="0" y2="1"><stop offset="0" stop-color="#fbdc94"/><stop offset="0.3" stop-color="#f8c064"/><stop offset="1" stop-color="#f09a30"/></linearGradient></defs><path d="M1.5 0.8 H11.5 L14 4 H32 Q33.2 4 33.2 5.2 V26 Q33.2 27.2 32 27.2 H2 Q0.8 27.2 0.8 26 V1.5 Q0.8 0.8 1.5 0.8Z" fill="url(#g51)" stroke="#d5832a" stroke-width="1"/><path d="M1.5 8.5 H32.5" stroke="#fde3a8" stroke-width="1.2"/><path d="M1.5 7.3 H32.5" stroke="#e8a74a" stroke-width="1"/></svg>
<span id="t16" class="t" style="left:115.5px;top:523.225px;line-height:18px;font-size:13.8px;color:#3c3c3c;font-weight:400;transform:scaleX(0.9220);transform-origin:left center;">Zolemba</span>
<svg style="left:39.7px;top:565.825px" width="17" height="17" viewBox="0 0 17 17"><circle cx="8.5" cy="8.5" r="7.5" fill="none" stroke="#a8b0b0" stroke-width="1.3"/><path d="M4.5 8.5 H12 M9 5.3 L12.2 8.5 L9 11.7" fill="none" stroke="#a8b0b0" stroke-width="1.3"/></svg>
<svg style="left:72px;top:560.525px" width="34" height="28" viewBox="0 0 34 28"><defs><linearGradient id="g52" x1="0" y1="0" x2="0" y2="1"><stop offset="0" stop-color="#fbdc94"/><stop offset="0.3" stop-color="#f8c064"/><stop offset="1" stop-color="#f09a30"/></linearGradient></defs><path d="M1.5 0.8 H11.5 L14 4 H32 Q33.2 4 33.2 5.2 V26 Q33.2 27.2 32 27.2 H2 Q0.8 27.2 0.8 26 V1.5 Q0.8 0.8 1.5 0.8Z" fill="url(#g52)" stroke="#d5832a" stroke-width="1"/><path d="M1.5 8.5 H32.5" stroke="#fde3a8" stroke-width="1.2"/><path d="M1.5 7.3 H32.5" stroke="#e8a74a" stroke-width="1"/></svg>
<span id="t17" class="t" style="left:115.5px;top:566.975px;line-height:18px;font-size:13.8px;color:#3c3c3c;font-weight:400;transform:scaleX(0.9359);transform-origin:left center;">Malipoti</span>
<svg style="left:310px;top:850px" width="16" height="16" viewBox="0 0 16 16"><circle cx="6" cy="6" r="4.3" fill="none" stroke="#1f78d1" stroke-width="2.2"/><path d="M9.3 9.3 L14.5 14.5" stroke="#1f78d1" stroke-width="2.8" stroke-linecap="round"/></svg>
<div style="left:24px;top:880px;width:317px;height:41px;border:1px solid #c6c6c6;background:#fff;"></div>
<div style="left:24px;top:922px;width:317px;height:1px;background:#d9d9d9"></div>
<svg style="left:30px;top:890.5px" width="18" height="18" viewBox="0 0 18 18"><path d="M1 17.5 Q1 11 9 11 Q17 11 17 17.5Z" fill="#7cb848" stroke="#5c9a30" stroke-width="0.6"/><circle cx="9" cy="6.5" r="4.6" fill="#f6cf9f" stroke="#d09a5e" stroke-width="0.6"/><path d="M4.2 6.5 Q3.8 1 9 1.3 Q14.2 1 13.8 6.5 Q12 3.8 9 4 Q6 3.8 4.2 6.5Z" fill="#a9683a"/></svg>
<span id="t18" class="t" style="left:54px;top:892.0px;line-height:18px;font-size:14.2px;color:#b9b9b9;font-weight:700;transform:scaleX(1.0363);transform-origin:left center;">Othandizira ukadaulo</span>
<svg style="left:278.5px;top:896.3px" width="11" height="9" viewBox="0 0 11 9"><rect x="0.7" y="0.7" width="9.6" height="7.6" fill="none" stroke="#8a8a8a" stroke-width="1.2"/><path d="M0.7 1.2 H10.3" stroke="#8a8a8a" stroke-width="2"/></svg>
<svg style="left:316.5px;top:895.3px" width="9" height="12" viewBox="0 0 9 12"><path d="M2 0.5 H7 V6 H8.5 V7.5 H0.5 V6 H2Z" fill="#8a8a8a"/><path d="M4.5 7.5 V12" stroke="#8a8a8a" stroke-width="1.2"/><rect x="3.4" y="1.5" width="1.2" height="4.5" fill="#fff"/></svg>
<div style="left:22px;top:928px;width:352px;height:1px;background:#cfcfcf"></div>
<div style="left:540px;top:930px;width:1027px;height:1px;background:#d9d9d9"></div>
<div style="left:24px;top:929px;width:163px;height:51px;background:#f5f5f5;border:1px solid #cfcfcf;border-top:none;"></div>
<div style="left:186px;top:929px;width:189px;height:51px;background:#f5f5f5;border:1px solid #cfcfcf;border-top:none;"></div>
<div style="left:374px;top:927px;width:166px;height:55px;background:#fff;border-right:1px solid #cfcfcf;border-left:1px solid #cfcfcf;"></div>
<div style="left:374px;top:980px;width:166px;height:2px;background:#18a0f0"></div>
<svg style="left:39.5px;top:937px" width="30" height="34" viewBox="0 0 30 34"><defs><linearGradient id="g53" x1="0" y1="0" x2="0" y2="1"><stop offset="0" stop-color="#d3e7f7"/><stop offset="1" stop-color="#78aede"/></linearGradient><linearGradient id="g54" x1="0" y1="0" x2="0" y2="1"><stop offset="0" stop-color="#66799f"/><stop offset="0.5" stop-color="#3f4f78"/><stop offset="1" stop-color="#2a375a"/></linearGradient></defs><rect x="0.5" y="0.5" width="29" height="33" rx="2.5" fill="url(#g53)" stroke="#4f7fc4"/><rect x="1" y="3" width="28.5" height="2.2" fill="#8db4da"/><rect x="2" y="1" width="27" height="2.2" fill="#f6f8fb"/><path d="M3 0.3 H6.2 V33.7 H3 Q0.3 33.7 0.3 31 V3 Q0.3 0.3 3 0.3Z" fill="url(#g54)"/><rect x="6.2" y="32" width="22.5" height="1.3" fill="#4a7cc6"/></svg>
<span id="t19" class="t" style="left:82px;top:946.5px;line-height:18px;font-size:13.8px;color:#555;font-weight:400;transform:scaleX(0.9302);transform-origin:left center;">Kutumiza</span>
<svg style="left:202.5px;top:937px" width="30" height="34" viewBox="0 0 30 34"><defs><linearGradient id="g55" x1="0" y1="0" x2="0" y2="1"><stop offset="0" stop-color="#d3e7f7"/><stop offset="1" stop-color="#78aede"/></linearGradient><linearGradient id="g56" x1="0" y1="0" x2="0" y2="1"><stop offset="0" stop-color="#66799f"/><stop offset="0.5" stop-color="#3f4f78"/><stop offset="1" stop-color="#2a375a"/></linearGradient></defs><rect x="0.5" y="0.5" width="29" height="33" rx="2.5" fill="url(#g55)" stroke="#4f7fc4"/><rect x="1" y="3" width="28.5" height="2.2" fill="#8db4da"/><rect x="2" y="1" width="27" height="2.2" fill="#f6f8fb"/><path d="M3 0.3 H6.2 V33.7 H3 Q0.3 33.7 0.3 31 V3 Q0.3 0.3 3 0.3Z" fill="url(#g56)"/><rect x="6.2" y="32" width="22.5" height="1.3" fill="#4a7cc6"/></svg>
<span id="t20" class="t" style="left:244px;top:946.5px;line-height:18px;font-size:13.8px;color:#555;font-weight:400;transform:scaleX(0.9457);transform-origin:left center;">Makasitomala</span>
<svg style="left:391px;top:938px" width="30" height="34" viewBox="0 0 30 34"><defs><linearGradient id="g57" x1="0" y1="0" x2="0" y2="1"><stop offset="0" stop-color="#d3e7f7"/><stop offset="1" stop-color="#78aede"/></linearGradient><linearGradient id="g58" x1="0" y1="0" x2="0" y2="1"><stop offset="0" stop-color="#66799f"/><stop offset="0.5" stop-color="#3f4f78"/><stop offset="1" stop-color="#2a375a"/></linearGradient></defs><rect x="0.5" y="0.5" width="29" height="33" rx="2.5" fill="url(#g57)" stroke="#4f7fc4"/><rect x="1" y="3" width="28.5" height="2.2" fill="#8db4da"/><rect x="2" y="1" width="27" height="2.2" fill="#f6f8fb"/><path d="M3 0.3 H6.2 V33.7 H3 Q0.3 33.7 0.3 31 V3 Q0.3 0.3 3 0.3Z" fill="url(#g58)"/><rect x="6.2" y="32" width="22.5" height="1.3" fill="#4a7cc6"/></svg>
<span id="t21" class="t" style="left:433px;top:947.5px;line-height:18px;font-size:13.8px;color:#18a0f0;font-weight:400;transform:scaleX(0.9279);transform-origin:left center;">Malamulo</span>
<div style="left:150.5px;top:944px;width:18px;height:19px;background:#fff"></div>
<svg style="left:155.0px;top:949px" width="10" height="10" viewBox="0 0 10 10"><path d="M1 1 L9 9 M9 1 L1 9" stroke="#18a0f0" stroke-width="2"/></svg>
<div style="left:338.5px;top:944px;width:18px;height:19px;background:#fff"></div>
<svg style="left:343.0px;top:949px" width="10" height="10" viewBox="0 0 10 10"><path d="M1 1 L9 9 M9 1 L1 9" stroke="#18a0f0" stroke-width="2"/></svg>
<div style="left:504px;top:945px;width:18px;height:19px;background:#fff"></div>
<svg style="left:508.5px;top:950px" width="10" height="10" viewBox="0 0 10 10"><path d="M1 1 L9 9 M9 1 L1 9" stroke="#18a0f0" stroke-width="2"/></svg>
<svg style="left:29px;top:985.5px" width="20" height="20" viewBox="0 0 20 20"><defs><linearGradient id="g59" x1="0" y1="0" x2="0" y2="1"><stop offset="0" stop-color="#5a9bdc"/><stop offset="1" stop-color="#2b63b8"/></linearGradient></defs><circle cx="10" cy="10" r="9.6" fill="url(#g59)"/><circle cx="10" cy="5.4" r="1.7" fill="#fff"/><rect x="8.5" y="8.3" width="3" height="7.5" fill="#fff"/></svg>
<span id="t22" class="t" style="left:70px;top:988.3px;line-height:18px;font-size:13.8px;color:#3a3a3a;font-weight:400;transform:scaleX(1.0021);transform-origin:left center;">7.3.9056.10 Standard</span>
<div style="left:229px;top:987px;width:1px;height:18px;background:#c4c4c4"></div>
<div style="left:399px;top:987px;width:1px;height:18px;background:#c4c4c4"></div>
<div style="left:578px;top:987px;width:1px;height:18px;background:#c4c4c4"></div>
<div style="left:727px;top:987px;width:1px;height:18px;background:#c4c4c4"></div>
<div style="left:876px;top:987px;width:1px;height:18px;background:#c4c4c4"></div>
<div style="left:1536px;top:987px;width:1px;height:18px;background:#c4c4c4"></div>
<svg style="left:244px;top:986.5px" width="16" height="18" viewBox="0 0 16 18"><defs><linearGradient id="g60" x1="0" y1="0" x2="1" y2="0"><stop offset="0" stop-color="#f9d48e"/><stop offset="0.5" stop-color="#fbe6b8"/><stop offset="1" stop-color="#e79a38"/></linearGradient></defs><path d="M0.8 3 V15 Q0.8 17.5 8 17.5 Q15.2 17.5 15.2 15 V3Z" fill="url(#g60)" stroke="#d08a34" stroke-width="0.9"/><ellipse cx="8" cy="3" rx="7.2" ry="2.5" fill="#fbe3b0" stroke="#d08a34" stroke-width="0.9"/><path d="M0.8 7.2 Q8 10.2 15.2 7.2 M0.8 11.4 Q8 14.4 15.2 11.4" fill="none" stroke="#d08a34" stroke-width="0.9"/></svg>
<span id="t23" class="t" style="left:282px;top:988.3px;line-height:18px;font-size:13.8px;color:#3a3a3a;font-weight:400;transform:scaleX(1.0055);transform-origin:left center;">localhost (utf8)</span>
<svg style="left:413px;top:986.5px" width="18" height="18" viewBox="0 0 18 18"><path d="M1 17.5 Q1 11 9 11 Q17 11 17 17.5Z" fill="#7cb848" stroke="#5c9a30" stroke-width="0.6"/><circle cx="9" cy="6.5" r="4.6" fill="#f6cf9f" stroke="#d09a5e" stroke-width="0.6"/><path d="M4.2 6.5 Q3.8 1 9 1.3 Q14.2 1 13.8 6.5 Q12 3.8 9 4 Q6 3.8 4.2 6.5Z" fill="#a9683a"/></svg>
<span id="t24" class="t" style="left:452px;top:988.3px;line-height:18px;font-size:13.8px;color:#3a3a3a;font-weight:400;transform:scaleX(0.9428);transform-origin:left center;">NIKOLAY (MAIN)</span>
<svg style="left:591.5px;top:986.5px" width="18" height="18" viewBox="0 0 18 18"><rect x="0.5" y="0.5" width="17" height="17" fill="#f4f6fb" stroke="#7f8fc4"/><rect x="0.5" y="0.5" width="17" height="4.5" fill="#d9574a"/><text x="9" y="15" font-family="Liberation Serif, serif" font-size="11" font-weight="700" fill="#2d3d78" text-anchor="middle">31</text></svg>
<span id="t25" class="t" style="left:631px;top:988.3px;line-height:18px;font-size:13.8px;color:#3a3a3a;font-weight:400;transform:scaleX(1.0208);transform-origin:left center;">04.09.2024</span>
<span id="t26" class="t" style="left:762px;top:988.3px;line-height:18px;font-size:13.8px;color:#3a3a3a;font-weight:400;transform:scaleX(1.0303);transform-origin:left center;">00:00:00:238</span>
<svg style="left:1550px;top:991px" width="15" height="15" viewBox="0 0 15 15"><path d="M12.2 0.6 L13.8 2.2 L12.2 3.8 L10.6 2.2Z" fill="#7c7c7c"/><path d="M7.4 5.3 L9.0 6.9 L7.4 8.5 L5.8 6.9Z" fill="#7c7c7c"/><path d="M12.2 5.3 L13.8 6.9 L12.2 8.5 L10.6 6.9Z" fill="#7c7c7c"/><path d="M2.5999999999999996 10.0 L4.199999999999999 11.6 L2.5999999999999996 13.2 L0.9999999999999999 11.6Z" fill="#7c7c7c"/><path d="M7.4 10.0 L9.0 11.6 L7.4 13.2 L5.8 11.6Z" fill="#7c7c7c"/><path d="M12.2 10.0 L13.8 11.6 L12.2 13.2 L10.6 11.6Z" fill="#7c7c7c"/></svg>
<div style="left:352px;top:176px;width:1px;height:20px;background:#c4c4c4"></div>
<div style="left:354px;top:176px;width:1px;height:20px;background:#c4c4c4"></div>
<svg style="left:366px;top:166.5px" width="30" height="36" viewBox="0 0 30 36"><rect x="0.6" y="0.6" width="29" height="35" rx="1.5" fill="#eef3fc" stroke="#a9b8e0" stroke-width="1.2"/><rect x="5" y="4" width="20" height="6" fill="#8ec6ea" stroke="#6aa8d4" stroke-width="0.6"/><path d="M5 13.8 H14" stroke="#8aa0c8" stroke-width="1.1"/><path d="M5 16.5 H14" stroke="#8aa0c8" stroke-width="1.1"/><path d="M5 19.5 H14" stroke="#8aa0c8" stroke-width="1.1"/><path d="M5 22.5 H14" stroke="#8aa0c8" stroke-width="1.1"/><path d="M5 25.5 H14" stroke="#8aa0c8" stroke-width="1.1"/><path d="M5 28.5 H14" stroke="#8aa0c8" stroke-width="1.1"/><path d="M5 31.5 H14" stroke="#8aa0c8" stroke-width="1.1"/><path d="M16 13.8 H25" stroke="#8aa0c8" stroke-width="1.1"/><path d="M16 16.5 H25" stroke="#8aa0c8" stroke-width="1.1"/><rect x="15.5" y="20" width="5" height="12" fill="#5aa5dc" stroke="#3c86c0" stroke-width="0.6"/><rect x="21" y="17" width="5" height="15" fill="#f0a052" stroke="#cf7f30" stroke-width="0.6"/></svg>
<span id="t27" class="t" style="left:406px;top:176.0px;line-height:20px;font-size:15px;color:#2f2f2f;font-weight:400;transform:scaleX(1.0544);transform-origin:left center;">Malipoti</span>
<svg style="left:464.5px;top:184.5px" width="7" height="5" viewBox="0 0 7 5"><path d="M0 0 H6.4 L3.2 3.8Z" fill="#3a3a3a"/></svg>
<svg style="left:485px;top:168.5px" width="35" height="35" viewBox="0 0 35 35"><defs><linearGradient id="g61" x1="0" y1="0" x2="0" y2="1"><stop offset="0" stop-color="#c2e290"/><stop offset="1" stop-color="#88bf4c"/></linearGradient></defs><circle cx="17.5" cy="17.5" r="17" fill="url(#g61)" stroke="#86b84e" stroke-width="1"/><path d="M9.5 14.2 H17.5 V9 L27 17.5 L17.5 26 V20.8 H9.5Z" fill="#f4fbe8" stroke="#6a9f34" stroke-width="0.9"/></svg>
<span id="t28" class="t" style="left:528px;top:176.0px;line-height:20px;font-size:15px;color:#2f2f2f;font-weight:400;transform:scaleX(0.9959);transform-origin:left center;">Zochita</span>
<svg style="left:581px;top:184.5px" width="7" height="5" viewBox="0 0 7 5"><path d="M0 0 H6.4 L3.2 3.8Z" fill="#3a3a3a"/></svg>
<div style="left:599px;top:164px;width:1px;height:45px;background:#c6c6c6"></div>
<svg style="left:609px;top:168px" width="36" height="36" viewBox="0 0 36 36"><circle cx="18" cy="18" r="16" fill="#fdfdfd" stroke="#e08882" stroke-width="3.4"/><circle cx="18" cy="18" r="17.6" fill="none" stroke="#c25a55" stroke-width="0.8"/><circle cx="18" cy="18" r="14" fill="none" stroke="#e9e2e2" stroke-width="1"/><path d="M18 18 L25 9 M18 18 V29" stroke="#7a8088" stroke-width="1.5" stroke-linecap="round"/><path d="M18 18 H6" stroke="#d9534f" stroke-width="1.3"/><circle cx="18" cy="18" r="1.4" fill="#444"/></svg>
<svg style="left:663.5px;top:177.5px" width="17" height="17" viewBox="0 0 17 17"><circle cx="8.5" cy="8.5" r="7.5" fill="none" stroke="#c6c6c6" stroke-width="1.4"/><path d="M5.6 5.6 L11 11 M6.3 11.2 H11.2 V6.3" fill="none" stroke="#c6c6c6" stroke-width="1.4"/></svg>
<span id="t29" class="t" style="left:1055px;top:169.9px;line-height:35px;font-size:26.8px;color:#33363c;font-weight:400;transform:scaleX(0.9693);transform-origin:left center;">Malamulo</span>
<svg style="left:1543.5px;top:177.5px" width="17" height="17" viewBox="0 0 17 17"><circle cx="8.5" cy="8.5" r="7.5" fill="none" stroke="#c6c6c6" stroke-width="1.4"/><path d="M5.6 5.6 L11 11 M6.3 11.2 H11.2 V6.3" fill="none" stroke="#c6c6c6" stroke-width="1.4"/></svg>
<div style="left:344px;top:216px;width:1223px;height:426px;border:1px solid #c8c8c8;border-bottom:2px solid #c4c4c4;background:#fff;"></div>
<div style="left:344px;top:216px;width:1px;height:711px;background:#c8c8c8"></div>
<div style="left:361px;top:234px;width:433px;height:31px;border:1px solid #c6c6c6;background:#fff;"></div>
<span id="t30" class="t" style="left:363.3px;top:241.4px;line-height:18px;font-size:13.8px;color:#3c3c3c;font-weight:400;transform:scaleX(0.9325);transform-origin:left center;">Kusaka ndi kusaka</span>
<svg style="left:773px;top:247px" width="9" height="5" viewBox="0 0 9 5"><path d="M0 0 H8 L4 4.5Z" fill="#4a4a4a"/></svg>
<div style="left:345px;top:280px;width:1221px;height:1px;background:#c8c8c8"></div>
<span id="t31" class="t" style="left:354.2px;top:295.0px;line-height:18px;font-size:13.8px;color:#bcbcc0;font-weight:400;transform:scaleX(0.9473);transform-origin:left center;">Kokani gawo lomwe lili pano kuti likhale gulu limodzi</span>
<div style="left:346px;top:324px;width:1203px;height:2px;background:#bdbdbd"></div>
<div style="left:346px;top:326px;width:1202px;height:42px;background:#f5f5f5"></div>
<span id="t32" class="t" style="left:361.2px;top:330.7px;line-height:18px;font-size:13.8px;color:#3c3c3c;font-weight:400;transform:scaleX(0.9798);transform-origin:left center;">Woyang'anira</span>
<span id="t33" class="t" style="left:542.7px;top:330.7px;line-height:18px;font-size:13.8px;color:#3c3c3c;font-weight:400;transform:scaleX(0.9281);transform-origin:left center;">Mkhalidwe</span>
<span id="t34" class="t" style="left:703.7px;top:330.7px;line-height:18px;font-size:13.8px;color:#3c3c3c;font-weight:400;transform:scaleX(0.9545);transform-origin:left center;">Tsiku lolandila</span>
<span id="t35" class="t" style="left:799.7px;top:330.7px;line-height:18px;font-size:13.8px;color:#3c3c3c;font-weight:400;transform:scaleX(0.9457);transform-origin:left center;">Makasitomala</span>
<span id="t36" class="t" style="left:959.7px;top:330.7px;line-height:18px;font-size:13.8px;color:#3c3c3c;font-weight:400;transform:scaleX(0.9612);transform-origin:left center;">Mtundu mankhwala</span>
<span id="t37" class="t" style="left:1119.7px;top:330.7px;line-height:18px;font-size:13.8px;color:#3c3c3c;font-weight:400;transform:scaleX(0.9495);transform-origin:left center;">Dzina</span>
<span id="t38" class="t" style="left:1261.5px;top:330.7px;line-height:18px;font-size:13.8px;color:#3c3c3c;font-weight:400;transform:scaleX(0.9517);transform-origin:left center;">Kuzungulira,</span>
<span id="t39" class="t" style="left:1261.5px;top:346.7px;line-height:18px;font-size:13.8px;color:#3c3c3c;font-weight:400;transform:scaleX(0.9370);transform-origin:left center;">makope</span>
<span id="t40" class="t" style="left:1357.7px;top:330.7px;line-height:18px;font-size:13.8px;color:#3c3c3c;font-weight:400;transform:scaleX(0.9720);transform-origin:left center;">Chiwerengero</span>
<span id="t41" class="t" style="left:1357.7px;top:346.7px;line-height:18px;font-size:13.8px;color:#3c3c3c;font-weight:400;transform:scaleX(0.9384);transform-origin:left center;">cha kulipira</span>
<span id="t42" class="t" style="left:1454px;top:330.7px;line-height:18px;font-size:13.8px;color:#3c3c3c;font-weight:400;transform:scaleX(0.9564);transform-origin:left center;">Ngongole</span>
<div style="left:346px;top:368px;width:13px;height:44px;background:#f5f5f5"></div>
<div style="left:360px;top:368px;width:1188px;height:43px;background:#d9f0ff"></div>
<div style="left:346px;top:411px;width:1202px;height:1px;background:#c3c3c3"></div>
<span id="t43" class="t" style="left:396px;top:381.5px;line-height:18px;font-size:13.8px;color:#3c3c3c;font-weight:400;transform:scaleX(0.9963);transform-origin:left center;">Wogwira ntchito 3</span>
<span id="t44" class="t" style="left:545px;top:381.5px;line-height:18px;font-size:13.8px;color:#3c3c3c;font-weight:400;transform:scaleX(0.9095);transform-origin:left center;">Zilipo</span>
<span id="t45" class="t" style="left:705px;top:381.5px;line-height:18px;font-size:13.8px;color:#3c3c3c;font-weight:400;transform:scaleX(1.0216);transform-origin:left center;">23.11.2020</span>
<span id="t46" class="t" style="left:801px;top:381.5px;line-height:18px;font-size:13.8px;color:#3c3c3c;font-weight:400;transform:scaleX(0.9521);transform-origin:left center;">Makasitomala 2</span>
<span id="t47" class="t" style="left:961px;top:381.5px;line-height:18px;font-size:13.8px;color:#3c3c3c;font-weight:400;transform:scaleX(0.9997);transform-origin:left center;">Tsitsani</span>
<span id="t48" class="t" style="right:234.70000000000005px;top:381.5px;line-height:18px;font-size:13.8px;color:#3c3c3c;font-weight:400;transform:scaleX(0.9943);transform-origin:right center;">100</span>
<span id="t49" class="t" style="right:138.29999999999995px;top:381.5px;line-height:18px;font-size:13.8px;color:#3c3c3c;font-weight:400;transform:scaleX(1.0034);transform-origin:right center;">1 200.00</span>
<span id="t50" class="t" style="right:43.299999999999955px;top:381.5px;line-height:18px;font-size:13.8px;color:#3c3c3c;font-weight:400;transform:scaleX(0.9976);transform-origin:right center;">600.00</span>
<div style="left:346px;top:412px;width:13px;height:44px;background:#f5f5f5"></div>
<div style="left:360px;top:412px;width:1188px;height:43px;background:#dcf9e1"></div>
<div style="left:346px;top:455px;width:1202px;height:1px;background:#c3c3c3"></div>
<span id="t51" class="t" style="left:396px;top:425.25px;line-height:18px;font-size:13.8px;color:#3c3c3c;font-weight:400;transform:scaleX(0.9963);transform-origin:left center;">Wogwira ntchito 3</span>
<span id="t52" class="t" style="left:545px;top:425.25px;line-height:18px;font-size:13.8px;color:#3c3c3c;font-weight:400;transform:scaleX(0.9858);transform-origin:left center;">Woyang'anira</span>
<span id="t53" class="t" style="left:705px;top:425.25px;line-height:18px;font-size:13.8px;color:#3c3c3c;font-weight:400;transform:scaleX(1.0216);transform-origin:left center;">24.11.2020</span>
<span id="t54" class="t" style="left:801px;top:425.25px;line-height:18px;font-size:13.8px;color:#3c3c3c;font-weight:400;transform:scaleX(0.9521);transform-origin:left center;">Makasitomala 4</span>
<span id="t55" class="t" style="left:961px;top:425.25px;line-height:18px;font-size:13.8px;color:#3c3c3c;font-weight:400;transform:scaleX(0.9997);transform-origin:left center;">Tsitsani</span>
<span id="t56" class="t" style="left:1120.5px;top:425.25px;line-height:18px;font-size:13.8px;color:#3c3c3c;font-weight:400;transform:scaleX(0.9722);transform-origin:left center;">Kutsatsa Code</span>
<span id="t57" class="t" style="right:234.70000000000005px;top:425.25px;line-height:18px;font-size:13.8px;color:#3c3c3c;font-weight:400;transform:scaleX(0.9943);transform-origin:right center;">500</span>
<span id="t58" class="t" style="right:138.29999999999995px;top:425.25px;line-height:18px;font-size:13.8px;color:#3c3c3c;font-weight:400;transform:scaleX(1.0090);transform-origin:right center;">0.00</span>
<span id="t59" class="t" style="right:43.299999999999955px;top:425.25px;line-height:18px;font-size:13.8px;color:#3c3c3c;font-weight:400;transform:scaleX(1.0090);transform-origin:right center;">0.00</span>
<div style="left:346px;top:456px;width:13px;height:44px;background:#f5f5f5"></div>
<div style="left:360px;top:456px;width:1188px;height:43px;background:#d9f0ff"></div>
<div style="left:346px;top:499px;width:1202px;height:1px;background:#c3c3c3"></div>
<span id="t60" class="t" style="left:396px;top:469.0px;line-height:18px;font-size:13.8px;color:#3c3c3c;font-weight:400;transform:scaleX(0.9937);transform-origin:left center;">Wogwira Ntchito 2</span>
<span id="t61" class="t" style="left:545px;top:469.0px;line-height:18px;font-size:13.8px;color:#3c3c3c;font-weight:400;transform:scaleX(0.9095);transform-origin:left center;">Zilipo</span>
<span id="t62" class="t" style="left:705px;top:469.0px;line-height:18px;font-size:13.8px;color:#3c3c3c;font-weight:400;transform:scaleX(1.0216);transform-origin:left center;">24.11.2020</span>
<span id="t63" class="t" style="left:801px;top:469.0px;line-height:18px;font-size:13.8px;color:#3c3c3c;font-weight:400;transform:scaleX(0.9521);transform-origin:left center;">Makasitomala 3</span>
<span id="t64" class="t" style="left:961px;top:469.0px;line-height:18px;font-size:13.8px;color:#3c3c3c;font-weight:400;transform:scaleX(0.9997);transform-origin:left center;">Tsitsani</span>
<span id="t65" class="t" style="right:234.70000000000005px;top:469.0px;line-height:18px;font-size:13.8px;color:#3c3c3c;font-weight:400;transform:scaleX(0.9943);transform-origin:right center;">220</span>
<span id="t66" class="t" style="right:138.29999999999995px;top:469.0px;line-height:18px;font-size:13.8px;color:#3c3c3c;font-weight:400;transform:scaleX(1.0034);transform-origin:right center;">2 310.00</span>
<span id="t67" class="t" style="right:43.299999999999955px;top:469.0px;line-height:18px;font-size:13.8px;color:#3c3c3c;font-weight:400;transform:scaleX(0.9976);transform-origin:right center;">310.00</span>
<div style="left:346px;top:500px;width:13px;height:44px;background:#f5f5f5"></div>
<div style="left:360px;top:500px;width:1188px;height:43px;background:#dcf9e1"></div>
<div style="left:346px;top:543px;width:1202px;height:1px;background:#c3c3c3"></div>
<span id="t68" class="t" style="left:396px;top:512.75px;line-height:18px;font-size:13.8px;color:#3c3c3c;font-weight:400;transform:scaleX(0.9937);transform-origin:left center;">Wogwira Ntchito 1</span>
<span id="t69" class="t" style="left:545px;top:512.75px;line-height:18px;font-size:13.8px;color:#3c3c3c;font-weight:400;transform:scaleX(0.9858);transform-origin:left center;">Woyang'anira</span>
<span id="t70" class="t" style="left:705px;top:512.75px;line-height:18px;font-size:13.8px;color:#3c3c3c;font-weight:400;transform:scaleX(1.0063);transform-origin:left center;">18.02.2021</span>
<span id="t71" class="t" style="left:801px;top:512.75px;line-height:18px;font-size:13.8px;color:#3c3c3c;font-weight:400;transform:scaleX(0.9521);transform-origin:left center;">Makasitomala 1</span>
<span id="t72" class="t" style="left:961px;top:512.75px;line-height:18px;font-size:13.8px;color:#3c3c3c;font-weight:400;transform:scaleX(0.9997);transform-origin:left center;">Tsitsani</span>
<span id="t73" class="t" style="right:234.70000000000005px;top:512.75px;line-height:18px;font-size:13.8px;color:#3c3c3c;font-weight:400;transform:scaleX(0.9901);transform-origin:right center;">1000</span>
<span id="t74" class="t" style="right:138.29999999999995px;top:512.75px;line-height:18px;font-size:13.8px;color:#3c3c3c;font-weight:400;transform:scaleX(1.0002);transform-origin:right center;">12 000.00</span>
<span id="t75" class="t" style="right:43.299999999999955px;top:512.75px;line-height:18px;font-size:13.8px;color:#3c3c3c;font-weight:400;transform:scaleX(1.0002);transform-origin:right center;">12 000.00</span>
<div style="left:346px;top:544px;width:13px;height:43px;background:#f5f5f5"></div>
<div style="left:360px;top:544px;width:1188px;height:42px;background:#d9f0ff"></div>
<div style="left:346px;top:586px;width:1202px;height:1px;background:#bdbdbd"></div>
<span id="t76" class="t" style="left:396px;top:556.5px;line-height:18px;font-size:13.8px;color:#3c3c3c;font-weight:400;transform:scaleX(0.9963);transform-origin:left center;">Wogwira ntchito 3</span>
<span id="t77" class="t" style="left:545px;top:556.5px;line-height:18px;font-size:13.8px;color:#3c3c3c;font-weight:400;transform:scaleX(0.9858);transform-origin:left center;">Woyang'anira</span>
<span id="t78" class="t" style="left:705px;top:556.5px;line-height:18px;font-size:13.8px;color:#3c3c3c;font-weight:400;transform:scaleX(1.0063);transform-origin:left center;">18.02.2021</span>
<span id="t79" class="t" style="left:801px;top:556.5px;line-height:18px;font-size:13.8px;color:#3c3c3c;font-weight:400;transform:scaleX(0.9521);transform-origin:left center;">Makasitomala 5</span>
<svg style="left:960px;top:557.0px" width="20" height="12" viewBox="0 0 20 12"><path d="M1 1 L13 0.5 L19.5 7.5 L7.5 8.5Z" fill="#3fa6b8" stroke="#2a7f94" stroke-width="0.7"/><path d="M7.5 8.5 L19.5 7.5 V10 L7.5 11.2Z" fill="#e9f2f4" stroke="#8ab" stroke-width="0.5"/><path d="M1 1 L7.5 8.5 V11.2 L1 3.5Z" fill="#2b7f92"/></svg>
<span id="t80" class="t" style="left:982px;top:556.5px;line-height:18px;font-size:13.8px;color:#3c3c3c;font-weight:400;transform:scaleX(1.0054);transform-origin:left center;">Directory</span>
<span id="t81" class="t" style="right:234.70000000000005px;top:556.5px;line-height:18px;font-size:13.8px;color:#3c3c3c;font-weight:400;transform:scaleX(0.9943);transform-origin:right center;">200</span>
<span id="t82" class="t" style="right:138.29999999999995px;top:556.5px;line-height:18px;font-size:13.8px;color:#3c3c3c;font-weight:400;transform:scaleX(1.0034);transform-origin:right center;">3 400.00</span>
<span id="t83" class="t" style="right:43.299999999999955px;top:556.5px;line-height:18px;font-size:13.8px;color:#3c3c3c;font-weight:400;transform:scaleX(1.0034);transform-origin:right center;">3 000.00</span>
<div style="left:346px;top:587px;width:1202px;height:1px;background:#dcdcdc"></div>
<div style="left:346px;top:367px;width:1202px;height:1px;background:#c3c3c3"></div>
<div style="left:345px;top:324px;width:1px;height:262px;background:#bdbdbd"></div>
<div style="left:359px;top:326px;width:1px;height:261px;background:#c3c3c3"></div>
<div style="left:541px;top:326px;width:1px;height:42px;background:#c3c3c3"></div>
<div style="left:702px;top:326px;width:1px;height:42px;background:#c3c3c3"></div>
<div style="left:798px;top:326px;width:1px;height:42px;background:#c3c3c3"></div>
<div style="left:958px;top:326px;width:1px;height:42px;background:#c3c3c3"></div>
<div style="left:1118px;top:326px;width:1px;height:42px;background:#c3c3c3"></div>
<div style="left:1259px;top:326px;width:1px;height:42px;background:#c3c3c3"></div>
<div style="left:1355px;top:326px;width:1px;height:42px;background:#c3c3c3"></div>
<div style="left:1452px;top:326px;width:1px;height:42px;background:#c3c3c3"></div>
<div style="left:1548px;top:326px;width:1px;height:42px;background:#c3c3c3"></div>
<div style="left:1548px;top:324px;width:1px;height:262px;background:#c3c3c3"></div>
<div style="left:360px;top:368px;width:1188px;height:43px;border:1px dotted #222;"></div>
<svg style="left:349.5px;top:385px" width="6" height="10" viewBox="0 0 6 10"><path d="M0.5 0.5 L5 5 L0.5 9.5Z" fill="#4a4a4a"/></svg>
<svg style="left:1458.2px;top:382.7px" width="12.4" height="12.4" viewBox="0 0 12 12"><rect x="0" y="0" width="12" height="12" rx="3" fill="#d81e1e"/><rect x="5" y="2.2" width="2.2" height="5" fill="#fff"/><rect x="5" y="8.3" width="2.2" height="2" fill="#fff"/></svg>
<div style="left:345px;top:594px;width:1204px;height:46px;background:#f5f5f5;border-top:1px solid #c3c3c3;border-right:1px solid #c3c3c3;"></div>
<div style="left:1263px;top:598px;width:91px;height:38px;background:#fff;border:1px solid #cfcfcf;"></div>
<span id="t84" class="t" style="right:242.70000000000005px;top:609.7px;line-height:18px;font-size:13.8px;color:#3c3c3c;font-weight:400;transform:scaleX(1.0049);transform-origin:right center;">2 020</span>
<div style="left:1359px;top:598px;width:92px;height:38px;background:#fff;border:1px solid #cfcfcf;"></div>
<span id="t85" class="t" style="right:145.70000000000005px;top:609.7px;line-height:18px;font-size:13.8px;color:#3c3c3c;font-weight:400;transform:scaleX(1.0002);transform-origin:right center;">18 910.00</span>
<div style="left:1455px;top:598px;width:91px;height:38px;background:#fff;border:1px solid #cfcfcf;"></div>
<span id="t86" class="t" style="right:50.700000000000045px;top:609.7px;line-height:18px;font-size:13.8px;color:#3c3c3c;font-weight:400;transform:scaleX(1.0002);transform-origin:right center;">15 910.00</span>
<div style="left:945px;top:645px;width:20px;height:1px;background:repeating-linear-gradient(to right,#9a9a9a 0 1px,transparent 1px 2px);"></div>
<div style="left:461px;top:654px;width:1003px;height:52px;background:#f5f5f5;border-top:1px solid #cfcfcf;border-bottom:1px solid #cfcfcf;"></div>
<div style="left:345px;top:651px;width:117px;height:56px;background:#fff;border-left:1px solid #cfcfcf;border-right:1px solid #cfcfcf;"></div>
<div style="left:345px;top:651px;width:116px;height:2px;background:#18a0f0"></div>
<svg style="left:362.5px;top:661.5px" width="30" height="34" viewBox="0 0 30 34"><defs><linearGradient id="g62" x1="0" y1="0" x2="0" y2="1"><stop offset="0" stop-color="#d3e7f7"/><stop offset="1" stop-color="#78aede"/></linearGradient><linearGradient id="g63" x1="0" y1="0" x2="0" y2="1"><stop offset="0" stop-color="#66799f"/><stop offset="0.5" stop-color="#3f4f78"/><stop offset="1" stop-color="#2a375a"/></linearGradient></defs><rect x="0.5" y="0.5" width="29" height="33" rx="2.5" fill="url(#g62)" stroke="#4f7fc4"/><rect x="1" y="3" width="28.5" height="2.2" fill="#8db4da"/><rect x="2" y="1" width="27" height="2.2" fill="#f6f8fb"/><path d="M3 0.3 H6.2 V33.7 H3 Q0.3 33.7 0.3 31 V3 Q0.3 0.3 3 0.3Z" fill="url(#g63)"/><rect x="6.2" y="32" width="22.5" height="1.3" fill="#4a7cc6"/></svg>
<span id="t87" class="t" style="left:405px;top:667.5px;line-height:26px;font-size:20.3px;color:#2a9fe8;font-weight:400;transform:scaleX(1.0011);transform-origin:left center;">Mbiri</span>
<div style="left:698px;top:655px;width:1px;height:50px;background:#cfcfcf"></div>
<svg style="left:476px;top:662.5px" width="30" height="34" viewBox="0 0 30 34"><defs><linearGradient id="g64" x1="0" y1="0" x2="0" y2="1"><stop offset="0" stop-color="#d3e7f7"/><stop offset="1" stop-color="#78aede"/></linearGradient><linearGradient id="g65" x1="0" y1="0" x2="0" y2="1"><stop offset="0" stop-color="#66799f"/><stop offset="0.5" stop-color="#3f4f78"/><stop offset="1" stop-color="#2a375a"/></linearGradient></defs><rect x="0.5" y="0.5" width="29" height="33" rx="2.5" fill="url(#g64)" stroke="#4f7fc4"/><rect x="1" y="3" width="28.5" height="2.2" fill="#8db4da"/><rect x="2" y="1" width="27" height="2.2" fill="#f6f8fb"/><path d="M3 0.3 H6.2 V33.7 H3 Q0.3 33.7 0.3 31 V3 Q0.3 0.3 3 0.3Z" fill="url(#g65)"/><rect x="6.2" y="32" width="22.5" height="1.3" fill="#4a7cc6"/></svg>
<span id="t88" class="t" style="left:518.5px;top:668.5px;line-height:26px;font-size:20.3px;color:#6e6e6e;font-weight:400;transform:scaleX(0.9797);transform-origin:left center;">Ntchito yaukadaulo</span>
<div style="left:821px;top:655px;width:1px;height:50px;background:#cfcfcf"></div>
<svg style="left:715.5px;top:662.5px" width="30" height="34" viewBox="0 0 30 34"><defs><linearGradient id="g66" x1="0" y1="0" x2="0" y2="1"><stop offset="0" stop-color="#d3e7f7"/><stop offset="1" stop-color="#78aede"/></linearGradient><linearGradient id="g67" x1="0" y1="0" x2="0" y2="1"><stop offset="0" stop-color="#66799f"/><stop offset="0.5" stop-color="#3f4f78"/><stop offset="1" stop-color="#2a375a"/></linearGradient></defs><rect x="0.5" y="0.5" width="29" height="33" rx="2.5" fill="url(#g66)" stroke="#4f7fc4"/><rect x="1" y="3" width="28.5" height="2.2" fill="#8db4da"/><rect x="2" y="1" width="27" height="2.2" fill="#f6f8fb"/><path d="M3 0.3 H6.2 V33.7 H3 Q0.3 33.7 0.3 31 V3 Q0.3 0.3 3 0.3Z" fill="url(#g67)"/><rect x="6.2" y="32" width="22.5" height="1.3" fill="#4a7cc6"/></svg>
<span id="t89" class="t" style="left:757px;top:668.5px;line-height:26px;font-size:20.3px;color:#6e6e6e;font-weight:400;transform:scaleX(0.9795);transform-origin:left center;">Zigwa</span>
<div style="left:1043px;top:655px;width:1px;height:50px;background:#cfcfcf"></div>
<svg style="left:838px;top:662.5px" width="30" height="34" viewBox="0 0 30 34"><defs><linearGradient id="g68" x1="0" y1="0" x2="0" y2="1"><stop offset="0" stop-color="#d3e7f7"/><stop offset="1" stop-color="#78aede"/></linearGradient><linearGradient id="g69" x1="0" y1="0" x2="0" y2="1"><stop offset="0" stop-color="#66799f"/><stop offset="0.5" stop-color="#3f4f78"/><stop offset="1" stop-color="#2a375a"/></linearGradient></defs><rect x="0.5" y="0.5" width="29" height="33" rx="2.5" fill="url(#g68)" stroke="#4f7fc4"/><rect x="1" y="3" width="28.5" height="2.2" fill="#8db4da"/><rect x="2" y="1" width="27" height="2.2" fill="#f6f8fb"/><path d="M3 0.3 H6.2 V33.7 H3 Q0.3 33.7 0.3 31 V3 Q0.3 0.3 3 0.3Z" fill="url(#g69)"/><rect x="6.2" y="32" width="22.5" height="1.3" fill="#4a7cc6"/></svg>
<span id="t90" class="t" style="left:879px;top:668.5px;line-height:26px;font-size:20.3px;color:#6e6e6e;font-weight:400;transform:scaleX(0.9628);transform-origin:left center;">Kudula mapepala</span>
<div style="left:1221px;top:655px;width:1px;height:50px;background:#cfcfcf"></div>
<svg style="left:1060px;top:662.5px" width="30" height="34" viewBox="0 0 30 34"><defs><linearGradient id="g70" x1="0" y1="0" x2="0" y2="1"><stop offset="0" stop-color="#d3e7f7"/><stop offset="1" stop-color="#78aede"/></linearGradient><linearGradient id="g71" x1="0" y1="0" x2="0" y2="1"><stop offset="0" stop-color="#66799f"/><stop offset="0.5" stop-color="#3f4f78"/><stop offset="1" stop-color="#2a375a"/></linearGradient></defs><rect x="0.5" y="0.5" width="29" height="33" rx="2.5" fill="url(#g70)" stroke="#4f7fc4"/><rect x="1" y="3" width="28.5" height="2.2" fill="#8db4da"/><rect x="2" y="1" width="27" height="2.2" fill="#f6f8fb"/><path d="M3 0.3 H6.2 V33.7 H3 Q0.3 33.7 0.3 31 V3 Q0.3 0.3 3 0.3Z" fill="url(#g71)"/><rect x="6.2" y="32" width="22.5" height="1.3" fill="#4a7cc6"/></svg>
<span id="t91" class="t" style="left:1100.5px;top:668.5px;line-height:26px;font-size:20.3px;color:#6e6e6e;font-weight:400;transform:scaleX(0.9746);transform-origin:left center;">Wonjezerani</span>
<div style="left:1376px;top:655px;width:1px;height:50px;background:#cfcfcf"></div>
<svg style="left:1238px;top:662.5px" width="30" height="34" viewBox="0 0 30 34"><defs><linearGradient id="g72" x1="0" y1="0" x2="0" y2="1"><stop offset="0" stop-color="#d3e7f7"/><stop offset="1" stop-color="#78aede"/></linearGradient><linearGradient id="g73" x1="0" y1="0" x2="0" y2="1"><stop offset="0" stop-color="#66799f"/><stop offset="0.5" stop-color="#3f4f78"/><stop offset="1" stop-color="#2a375a"/></linearGradient></defs><rect x="0.5" y="0.5" width="29" height="33" rx="2.5" fill="url(#g72)" stroke="#4f7fc4"/><rect x="1" y="3" width="28.5" height="2.2" fill="#8db4da"/><rect x="2" y="1" width="27" height="2.2" fill="#f6f8fb"/><path d="M3 0.3 H6.2 V33.7 H3 Q0.3 33.7 0.3 31 V3 Q0.3 0.3 3 0.3Z" fill="url(#g73)"/><rect x="6.2" y="32" width="22.5" height="1.3" fill="#4a7cc6"/></svg>
<span id="t92" class="t" style="left:1279.5px;top:668.5px;line-height:26px;font-size:20.3px;color:#6e6e6e;font-weight:400;transform:scaleX(0.9778);transform-origin:left center;">Zipangizo</span>
<svg style="left:1393.5px;top:662.5px" width="30" height="34" viewBox="0 0 30 34"><defs><linearGradient id="g74" x1="0" y1="0" x2="0" y2="1"><stop offset="0" stop-color="#d3e7f7"/><stop offset="1" stop-color="#78aede"/></linearGradient><linearGradient id="g75" x1="0" y1="0" x2="0" y2="1"><stop offset="0" stop-color="#66799f"/><stop offset="0.5" stop-color="#3f4f78"/><stop offset="1" stop-color="#2a375a"/></linearGradient></defs><rect x="0.5" y="0.5" width="29" height="33" rx="2.5" fill="url(#g74)" stroke="#4f7fc4"/><rect x="1" y="3" width="28.5" height="2.2" fill="#8db4da"/><rect x="2" y="1" width="27" height="2.2" fill="#f6f8fb"/><path d="M3 0.3 H6.2 V33.7 H3 Q0.3 33.7 0.3 31 V3 Q0.3 0.3 3 0.3Z" fill="url(#g75)"/><rect x="6.2" y="32" width="22.5" height="1.3" fill="#4a7cc6"/></svg>
<span class="t" style="left:1434.5px;top:668.5px;line-height:26px;font-size:20.3px;color:#6e6e6e;width:29.0px;overflow:hidden;">Ntchito</span>
<div style="left:1464px;top:650px;width:110px;height:57px;background:#fff"></div>
<svg style="left:1479px;top:666px" width="8" height="5" viewBox="0 0 8 5"><path d="M0 0 H7 L3.5 4Z" fill="#4a4a4a"/></svg>
<svg style="left:1513px;top:663px" width="5" height="9" viewBox="0 0 5 9"><path d="M4.5 0.5 L0.5 4.5 L4.5 8.5Z" fill="#c4c4c4"/></svg>
<svg style="left:1548px;top:663px" width="5" height="9" viewBox="0 0 5 9"><path d="M0.5 0.5 L4.5 4.5 L0.5 8.5Z" fill="#4a4a4a"/></svg>
<div style="left:344px;top:706px;width:1223px;height:222px;border:1px solid #c8c8c8;border-bottom:2px solid #c8c8c8;background:#fff;"></div>
<div style="left:347px;top:708px;width:968px;height:2px;background:#bdbdbd"></div>
<div style="left:348px;top:710px;width:966px;height:42px;background:#f5f5f5"></div>
<span id="t93" class="t" style="left:364.5px;top:714.5px;line-height:18px;font-size:13.8px;color:#3c3c3c;font-weight:400;transform:scaleX(0.9599);transform-origin:left center;">Kuchokera paudindo</span>
<span id="t94" class="t" style="left:636.5px;top:714.5px;line-height:18px;font-size:13.8px;color:#3c3c3c;font-weight:400;transform:scaleX(0.9499);transform-origin:left center;">Kwa udindo</span>
<span id="t95" class="t" style="left:886.5px;top:714.5px;line-height:18px;font-size:13.8px;color:#3c3c3c;font-weight:400;transform:scaleX(1.0010);transform-origin:left center;">Wogwira ntchito</span>
<span id="t96" class="t" style="left:1136.5px;top:714.5px;line-height:18px;font-size:13.8px;color:#3c3c3c;font-weight:400;transform:scaleX(0.9677);transform-origin:left center;">Kusinthidwa</span>
<div style="left:348px;top:752px;width:14px;height:44px;background:#f5f5f5"></div>
<div style="left:362px;top:752px;width:952px;height:43px;background:#d9f0ff"></div>
<div style="left:348px;top:795px;width:966px;height:1px;background:#c3c3c3"></div>
<span id="t97" class="t" style="left:398px;top:765.6px;line-height:18px;font-size:13.8px;color:#3c3c3c;font-weight:400;transform:scaleX(0.9858);transform-origin:left center;">Woyang'anira</span>
<span id="t98" class="t" style="left:637px;top:765.6px;line-height:18px;font-size:13.8px;color:#3c3c3c;font-weight:400;transform:scaleX(0.9970);transform-origin:left center;">Wogwiritsira ntchito</span>
<span id="t99" class="t" style="left:887px;top:765.6px;line-height:18px;font-size:13.8px;color:#3c3c3c;font-weight:400;transform:scaleX(0.9963);transform-origin:left center;">Wogwira ntchito 3</span>
<span id="t100" class="t" style="left:1138px;top:765.6px;line-height:18px;font-size:13.8px;color:#3c3c3c;font-weight:400;transform:scaleX(1.0193);transform-origin:left center;">23.11.2020 12:23:00</span>
<div style="left:348px;top:796px;width:14px;height:44px;background:#f5f5f5"></div>
<div style="left:362px;top:796px;width:952px;height:43px;background:#dcf9e1"></div>
<div style="left:348px;top:839px;width:966px;height:1px;background:#c3c3c3"></div>
<span id="t101" class="t" style="left:398px;top:809.6px;line-height:18px;font-size:13.8px;color:#3c3c3c;font-weight:400;transform:scaleX(0.9970);transform-origin:left center;">Wogwiritsira ntchito</span>
<span id="t102" class="t" style="left:637px;top:809.6px;line-height:18px;font-size:13.8px;color:#3c3c3c;font-weight:400;transform:scaleX(0.9622);transform-origin:left center;">Katswiri wamaphunziro</span>
<span id="t103" class="t" style="left:887px;top:809.6px;line-height:18px;font-size:13.8px;color:#3c3c3c;font-weight:400;transform:scaleX(0.9963);transform-origin:left center;">Wogwira ntchito 3</span>
<span id="t104" class="t" style="left:1138px;top:809.6px;line-height:18px;font-size:13.8px;color:#3c3c3c;font-weight:400;transform:scaleX(1.0277);transform-origin:left center;">23.11.2020 12:23:11</span>
<div style="left:348px;top:840px;width:14px;height:44px;background:#f5f5f5"></div>
<div style="left:362px;top:840px;width:952px;height:43px;background:#d9f0ff"></div>
<div style="left:348px;top:883px;width:966px;height:1px;background:#bdbdbd"></div>
<span id="t105" class="t" style="left:398px;top:853.6px;line-height:18px;font-size:13.8px;color:#3c3c3c;font-weight:400;transform:scaleX(0.9622);transform-origin:left center;">Katswiri wamaphunziro</span>
<span id="t106" class="t" style="left:637px;top:853.6px;line-height:18px;font-size:13.8px;color:#3c3c3c;font-weight:400;transform:scaleX(0.9502);transform-origin:left center;">Popanga</span>
<span id="t107" class="t" style="left:887px;top:853.6px;line-height:18px;font-size:13.8px;color:#3c3c3c;font-weight:400;transform:scaleX(0.9963);transform-origin:left center;">Wogwira ntchito 3</span>
<span id="t108" class="t" style="left:1138px;top:853.6px;line-height:18px;font-size:13.8px;color:#3c3c3c;font-weight:400;transform:scaleX(1.0277);transform-origin:left center;">24.11.2020 11:39:24</span>
<div style="left:348px;top:751px;width:966px;height:1px;background:#c3c3c3"></div>
<div style="left:347px;top:708px;width:1px;height:215px;background:#bdbdbd"></div>
<div style="left:362px;top:710px;width:1px;height:174px;background:#c3c3c3"></div>
<div style="left:634px;top:710px;width:1px;height:42px;background:#c3c3c3"></div>
<div style="left:884px;top:710px;width:1px;height:42px;background:#c3c3c3"></div>
<div style="left:1134px;top:710px;width:1px;height:42px;background:#c3c3c3"></div>
<div style="left:1314px;top:708px;width:1px;height:215px;background:#c3c3c3"></div>
<div style="left:348px;top:884px;width:966px;height:38px;background:#f5f5f5"></div>
<div style="left:347px;top:922px;width:968px;height:1px;background:#bdbdbd"></div>
<div style="left:347px;top:923px;width:1218px;height:1px;background:#dedede"></div>
<svg style="left:351.5px;top:769px" width="6" height="10" viewBox="0 0 6 10"><path d="M0.5 0.5 L5 5 L0.5 9.5Z" fill="#4a4a4a"/></svg>
<div style="left:1542px;top:707px;width:22px;height:216px;border-left:1px solid #d4d4d4;border-right:1px solid #d4d4d4;background:#fff;"></div>
<div style="left:1548.5px;top:731px;width:9.5px;height:128px;background:#b4b4b4"></div>
<svg style="left:1549px;top:718px" width="8" height="5" viewBox="0 0 8 5"><path d="M0 4.2 H7 L3.5 0Z" fill="#8a8a8a"/></svg>
<svg style="left:1549px;top:910px" width="8" height="5" viewBox="0 0 8 5"><path d="M0 0 H7 L3.5 4.2Z" fill="#8a8a8a"/></svg>
</body></html>
